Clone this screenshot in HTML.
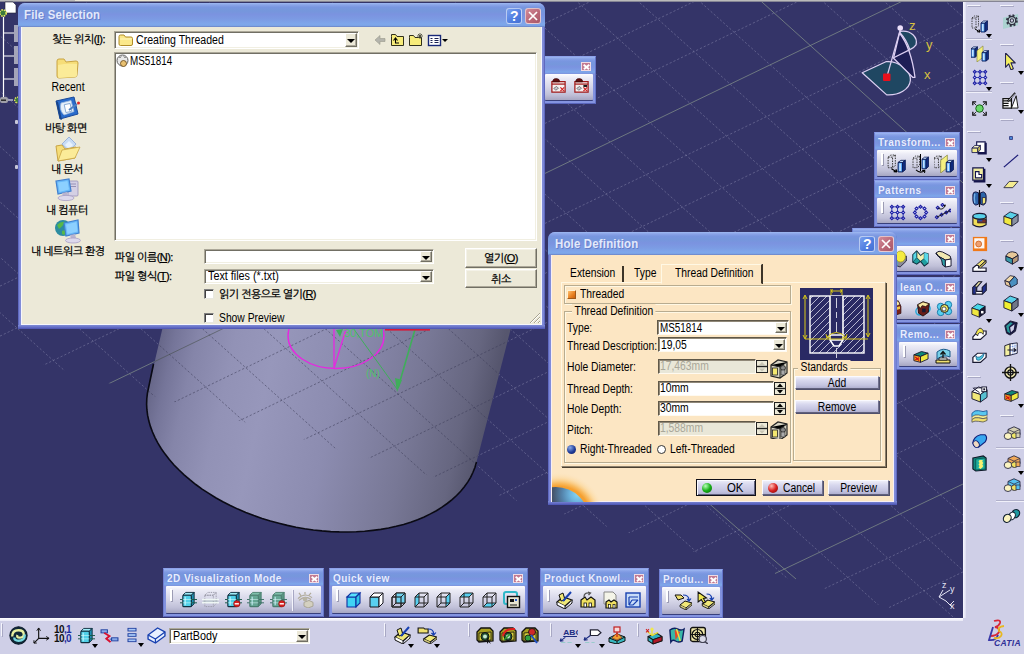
<!DOCTYPE html>
<html lang="ko">
<head>
<meta charset="utf-8">
<title>CATIA V5 - Hole Definition</title>
<style>
*{box-sizing:border-box;margin:0;padding:0}
html,body{width:1024px;height:654px;overflow:hidden;background:#343468}
body{position:relative;font-family:"Liberation Sans","NanumGothic","Noto Sans CJK KR",sans-serif;font-size:12px;color:#000;line-height:1}
.abs{position:absolute}
.t{position:absolute;white-space:nowrap;transform-origin:0 50%;line-height:14px;height:14px}
.k{font-family:"Liberation Sans","NanumGothic","Noto Sans CJK KR",sans-serif;font-size:11px;letter-spacing:-0.55px;-webkit-text-stroke:.25px #000}
#vp{position:absolute;left:0;top:0;width:1024px;height:654px}
/* XP-like window */
.xpwin{position:absolute;background:linear-gradient(to top,#4a52b2 0,#6872c8 2px,#7f8cd8 4px,rgba(0,0,0,0) 4px),linear-gradient(90deg,#4c54b0 0,#7a86d6 1.2px,#848fda 3px,#848fda calc(100% - 3px),#7a86d6 calc(100% - 1.2px),#4c54b0 100%);border-radius:7px 7px 0 0}
.xptitle{position:absolute;left:0;top:0;right:0;height:24px;border-radius:7px 7px 0 0;
 background:linear-gradient(#9fbaf1 0,#8aa4e8 8%,#7996e0 18%,#7597dc 32%,#7b93e0 48%,#7c9ce4 70%,#7ea7eb 88%,#7ba3e6 94%,#6a80c2 100%)}
.xptitle b{position:absolute;left:5px;top:4px;color:#e3e9fb;font-size:13px;font-weight:bold;letter-spacing:.2px;line-height:16px;text-shadow:1px 1px 0 rgba(80,100,180,.55);transform:scaleX(.88);transform-origin:0 50%;white-space:nowrap}
.xbtn{position:absolute;width:16px;height:16px;border-radius:3px;border:1px solid rgba(255,255,255,.6)}
.xclose{background:linear-gradient(135deg,#d28a98,#b96676 60%,#a85868)}
.xhelp{background:linear-gradient(135deg,#7aa0ee,#4f7de0 60%,#4670d2)}
/* classic controls */
.sunk{position:absolute;background:#fff;border:1px solid;border-color:#aca899 #fff #fff #aca899;box-shadow:inset 1px 1px 0 #716f64,inset -1px -1px 0 #f1efe2}
.cbtn{position:absolute;background:#ece9d8;border:1px solid;border-color:#fff #716f64 #716f64 #fff;box-shadow:inset -1px -1px 0 #aca899,inset 1px 1px 0 #f4f2e8;text-align:center}
.arrowbtn{position:absolute;background:#ece9d8;border:1px solid;border-color:#fff #716f64 #716f64 #fff;box-shadow:inset -1px -1px 0 #aca899}
.arrowbtn:after{content:"";position:absolute;left:50%;top:50%;margin:-1px 0 0 -4px;border:4px solid transparent;border-top:4px solid #000;border-bottom:none}
.chk{position:absolute;width:10px;height:10px;background:#fff;border:1px solid;border-color:#808080 #e8e8e0 #e8e8e0 #808080;box-shadow:inset 1px 1px 0 #404040}
/* CATIA floating toolbar */
.ftb{position:absolute;background:linear-gradient(#9cb6f0 0,#86a0e6 2px,#7996e0 4px,#7697dc 7px,#7b93e0 10px,#7c9ce4 13px,#7ea7eb 15px,#7c9ee4 16px,#8090dc 17px,#8494e0 100%);border:1px solid;border-color:#8ea2ea #6474c8 #5a66bc #6e7ed2}
.ftb .ttl{position:absolute;left:3px;top:3px;color:#e8eeff;font-weight:bold;font-size:10px;letter-spacing:.45px;line-height:13px;white-space:nowrap;text-shadow:0 0 1px rgba(90,110,190,.6)}
.ftb .body{position:absolute;left:2px;right:2px;bottom:3px;top:17px;background:linear-gradient(#fdfdff 0,#ececf6 15%,#d6d6e8 50%,#c0c0d8 80%,#a6a6c2 100%);border-radius:1px;box-shadow:0 1px 0 #38407c}
.ftb .grip{position:absolute;left:4px;top:3px;width:2px;height:12px;background:#fff;box-shadow:1px 1px 0 #9c9cb4}
.fx{position:absolute;width:10px;height:9px;top:5px;background:#c27a92;border:1px solid #f0dbe4}
.fx:before,.fx:after{content:"";position:absolute;left:.5px;top:2.7px;width:7px;height:1.6px;background:#fff;transform:rotate(40deg)}
.fx:after{transform:rotate(-40deg)}
/* main toolbars */
#rtb{position:absolute;left:963px;top:2px;width:61px;height:652px;background:#cfcfe7}
#btb{position:absolute;left:0;top:618px;width:1024px;height:36px;background:#cfcfe7}
.ic{position:absolute;width:20px;height:20px}
.sep{position:absolute;background:#f4f4fc;box-shadow:1px 1px 0 #a8a8c4}
.dd{position:absolute;width:0;height:0;border:3px solid transparent;border-top:4px solid #000;border-bottom:none}
/* CATIA dialog controls */
.cbt{position:absolute;background:linear-gradient(#eeeef8 0,#d8d8ee 30%,#c4c4e0 75%,#b0b0d0 100%);border:1px solid;border-color:#fafaff #70708c #60607c #fafaff;box-shadow:1px 1px 0 #50506c;text-align:center}
.grp{position:absolute;border:1px solid #b8ac90;box-shadow:inset 1px 1px 0 #fff8e4, 1px 1px 0 #fff8e4}
.csunk{position:absolute;background:#fff;border:1px solid;border-color:#605848 #fffaf0 #fffaf0 #605848;box-shadow:inset 1px 1px 0 #908878}
.cdis{background:#e9e7d8}
</style>
</head>
<body>
<svg id="vp" width="1024" height="654" viewBox="0 0 1024 654">
<defs>
<linearGradient id="cg" gradientUnits="userSpaceOnUse" x1="148" y1="388" x2="477" y2="462">
<stop offset="0" stop-color="#666688"/><stop offset="0.045" stop-color="#757599"/><stop offset="0.11" stop-color="#8585a9"/><stop offset="0.22" stop-color="#9292b6"/>
<stop offset="0.34" stop-color="#9797bb"/><stop offset="0.55" stop-color="#8c8cb0"/><stop offset="0.78" stop-color="#787896"/>
<stop offset="0.93" stop-color="#666680"/><stop offset="1" stop-color="#56566e"/></linearGradient>
<clipPath id="cylclip"><path d="M163,326 L148.5,388.0 L147.4,393.3 L146.8,398.7 L146.6,404.2 L146.9,409.7 L147.6,415.2 L148.8,420.8 L150.4,426.4 L152.5,432.0 L155.0,437.6 L157.9,443.2 L161.3,448.7 L165.1,454.1 L169.3,459.4 L173.8,464.7 L178.8,469.8 L184.1,474.9 L189.8,479.7 L195.8,484.5 L202.1,489.1 L208.8,493.4 L215.7,497.7 L222.9,501.7 L230.3,505.5 L237.9,509.1 L245.8,512.4 L253.9,515.5 L262.1,518.4 L270.4,521.0 L278.9,523.3 L287.4,525.4 L296.0,527.2 L304.7,528.7 L313.4,530.0 L322.0,530.9 L330.7,531.6 L339.3,531.9 L347.8,532.0 L356.3,531.8 L364.6,531.3 L372.8,530.4 L380.8,529.4 L388.6,528.0 L396.2,526.3 L403.6,524.4 L410.7,522.2 L417.6,519.7 L424.2,516.9 L430.4,513.9 L436.4,510.7 L442.0,507.2 L447.2,503.5 L452.1,499.6 L456.6,495.5 L460.7,491.2 L464.4,486.7 L467.7,482.1 L470.6,477.3 L473.0,472.3 L475.0,467.2 L476.5,462.0 L511.5,326 Z"/></clipPath>
<clipPath id="bgclip"><path clip-rule="evenodd" d="M0,0 L1024,0 L1024,646.8 L0,351.9 Z M163,326 L148.5,388.0 L147.4,393.3 L146.8,398.7 L146.6,404.2 L146.9,409.7 L147.6,415.2 L148.8,420.8 L150.4,426.4 L152.5,432.0 L155.0,437.6 L157.9,443.2 L161.3,448.7 L165.1,454.1 L169.3,459.4 L173.8,464.7 L178.8,469.8 L184.1,474.9 L189.8,479.7 L195.8,484.5 L202.1,489.1 L208.8,493.4 L215.7,497.7 L222.9,501.7 L230.3,505.5 L237.9,509.1 L245.8,512.4 L253.9,515.5 L262.1,518.4 L270.4,521.0 L278.9,523.3 L287.4,525.4 L296.0,527.2 L304.7,528.7 L313.4,530.0 L322.0,530.9 L330.7,531.6 L339.3,531.9 L347.8,532.0 L356.3,531.8 L364.6,531.3 L372.8,530.4 L380.8,529.4 L388.6,528.0 L396.2,526.3 L403.6,524.4 L410.7,522.2 L417.6,519.7 L424.2,516.9 L430.4,513.9 L436.4,510.7 L442.0,507.2 L447.2,503.5 L452.1,499.6 L456.6,495.5 L460.7,491.2 L464.4,486.7 L467.7,482.1 L470.6,477.3 L473.0,472.3 L475.0,467.2 L476.5,462.0 L511.5,326 Z"/></clipPath>
<clipPath id="halfclip"><path d="M0,0 L1024,0 L1024,646.8 L0,351.9 Z"/></clipPath>
</defs>
<g clip-path="url(#bgclip)"><path d="M0.0,286.1 L1024.0,-207.5 M0.0,336.1 L1024.0,-157.5 M0.0,386.1 L1024.0,-107.5 M0.0,486.1 L1024.0,-7.5 M0.0,536.1 L1024.0,42.5 M0.0,586.1 L1024.0,92.5 M0.0,636.1 L1024.0,142.5 M0.0,686.1 L1024.0,192.5 M0.0,736.1 L1024.0,242.5 M0.0,786.1 L1024.0,292.5 M0.0,836.1 L1024.0,342.5 M0.0,886.1 L1024.0,392.5 M0.0,986.1 L1024.0,492.5 M0.0,1036.1 L1024.0,542.5 M0.0,1086.1 L1024.0,592.5 M0.0,1136.1 L1024.0,642.5 M0.0,1186.1 L1024.0,692.5 M-408.8,0.0 L317.8,654.0 M-347.3,0.0 L379.3,654.0 M-285.8,0.0 L440.8,654.0 M-224.3,0.0 L502.3,654.0 M-162.8,0.0 L563.8,654.0 M-101.3,0.0 L625.3,654.0 M-39.8,0.0 L686.8,654.0 M21.7,0.0 L748.3,654.0 M83.2,0.0 L809.8,654.0 M144.7,0.0 L871.3,654.0 M206.2,0.0 L932.8,654.0 M267.7,0.0 L994.3,654.0 M329.2,0.0 L1055.8,654.0 M390.7,0.0 L1117.3,654.0 M452.2,0.0 L1178.8,654.0 M513.7,0.0 L1240.3,654.0 M575.2,0.0 L1301.8,654.0 M636.7,0.0 L1363.3,654.0 M698.2,0.0 L1424.8,654.0 M821.2,0.0 L1547.8,654.0 M882.7,0.0 L1609.3,654.0 M944.2,0.0 L1670.8,654.0 M1005.7,0.0 L1732.3,654.0 M1067.2,0.0 L1793.8,654.0" stroke="#a8a8c8" stroke-opacity="0.36" stroke-width="1" stroke-dasharray="2.2 2" fill="none"/>
<path d="M0.0,436.1 L1024.0,-57.5 M759.7,0.0 L1486.3,654.0" stroke="#90a090" stroke-opacity="0.62" stroke-width="1" fill="none"/>
<path d="M775,573.5 L963,484 M768,555 L796,579 M705,500 L768,555" stroke="#90a090" stroke-opacity="0.62" stroke-width="1" fill="none"/>
</g>
<path d="M163,326 L148.5,388.0 L147.4,393.3 L146.8,398.7 L146.6,404.2 L146.9,409.7 L147.6,415.2 L148.8,420.8 L150.4,426.4 L152.5,432.0 L155.0,437.6 L157.9,443.2 L161.3,448.7 L165.1,454.1 L169.3,459.4 L173.8,464.7 L178.8,469.8 L184.1,474.9 L189.8,479.7 L195.8,484.5 L202.1,489.1 L208.8,493.4 L215.7,497.7 L222.9,501.7 L230.3,505.5 L237.9,509.1 L245.8,512.4 L253.9,515.5 L262.1,518.4 L270.4,521.0 L278.9,523.3 L287.4,525.4 L296.0,527.2 L304.7,528.7 L313.4,530.0 L322.0,530.9 L330.7,531.6 L339.3,531.9 L347.8,532.0 L356.3,531.8 L364.6,531.3 L372.8,530.4 L380.8,529.4 L388.6,528.0 L396.2,526.3 L403.6,524.4 L410.7,522.2 L417.6,519.7 L424.2,516.9 L430.4,513.9 L436.4,510.7 L442.0,507.2 L447.2,503.5 L452.1,499.6 L456.6,495.5 L460.7,491.2 L464.4,486.7 L467.7,482.1 L470.6,477.3 L473.0,472.3 L475.0,467.2 L476.5,462.0 L511.5,326 Z" fill="url(#cg)"/>
<g clip-path="url(#halfclip)"><g clip-path="url(#cylclip)"><path d="M0.0,286.1 L1024.0,-207.5 M0.0,336.1 L1024.0,-157.5 M0.0,386.1 L1024.0,-107.5 M0.0,486.1 L1024.0,-7.5 M0.0,536.1 L1024.0,42.5 M0.0,586.1 L1024.0,92.5 M0.0,636.1 L1024.0,142.5 M0.0,686.1 L1024.0,192.5 M0.0,736.1 L1024.0,242.5 M0.0,786.1 L1024.0,292.5 M0.0,836.1 L1024.0,342.5 M0.0,886.1 L1024.0,392.5 M0.0,986.1 L1024.0,492.5 M0.0,1036.1 L1024.0,542.5 M0.0,1086.1 L1024.0,592.5 M0.0,1136.1 L1024.0,642.5 M0.0,1186.1 L1024.0,692.5 M-408.8,0.0 L317.8,654.0 M-347.3,0.0 L379.3,654.0 M-285.8,0.0 L440.8,654.0 M-224.3,0.0 L502.3,654.0 M-162.8,0.0 L563.8,654.0 M-101.3,0.0 L625.3,654.0 M-39.8,0.0 L686.8,654.0 M21.7,0.0 L748.3,654.0 M83.2,0.0 L809.8,654.0 M144.7,0.0 L871.3,654.0 M206.2,0.0 L932.8,654.0 M267.7,0.0 L994.3,654.0 M329.2,0.0 L1055.8,654.0 M390.7,0.0 L1117.3,654.0 M452.2,0.0 L1178.8,654.0 M513.7,0.0 L1240.3,654.0 M575.2,0.0 L1301.8,654.0 M636.7,0.0 L1363.3,654.0 M698.2,0.0 L1424.8,654.0 M821.2,0.0 L1547.8,654.0 M882.7,0.0 L1609.3,654.0 M944.2,0.0 L1670.8,654.0 M1005.7,0.0 L1732.3,654.0 M1067.2,0.0 L1793.8,654.0" stroke="#3c3c58" stroke-opacity="0.55" stroke-width="1" stroke-dasharray="2.2 2" fill="none"/>
<path d="M0.0,436.1 L1024.0,-57.5" stroke="#444e48" stroke-opacity="0.7" stroke-width=".8" fill="none"/></g></g>
<path d="M153.5,364 L148.5,388.0 L147.4,393.3 L146.8,398.7 L146.6,404.2 L146.9,409.7 L147.6,415.2 L148.8,420.8 L150.4,426.4 L152.5,432.0 L155.0,437.6 L157.9,443.2 L161.3,448.7 L165.1,454.1 L169.3,459.4 L173.8,464.7 L178.8,469.8 L184.1,474.9 L189.8,479.7 L195.8,484.5 L202.1,489.1 L208.8,493.4 L215.7,497.7 L222.9,501.7 L230.3,505.5 L237.9,509.1 L245.8,512.4 L253.9,515.5 L262.1,518.4 L270.4,521.0 L278.9,523.3 L287.4,525.4 L296.0,527.2 L304.7,528.7 L313.4,530.0 L322.0,530.9 L330.7,531.6 L339.3,531.9 L347.8,532.0 L356.3,531.8 L364.6,531.3 L372.8,530.4 L380.8,529.4 L388.6,528.0 L396.2,526.3 L403.6,524.4 L410.7,522.2 L417.6,519.7 L424.2,516.9 L430.4,513.9 L436.4,510.7 L442.0,507.2 L447.2,503.5 L452.1,499.6 L456.6,495.5 L460.7,491.2 L464.4,486.7 L467.7,482.1 L470.6,477.3 L473.0,472.3 L475.0,467.2 L476.5,462.0" stroke="#0a0a14" stroke-width="1.6" fill="none"/>
<ellipse cx="336" cy="336" rx="48" ry="32.5" fill="none" stroke="#e628e0" stroke-width="1.4"/>
<path d="M334,326 L334,368 M347,326 L334,368" stroke="#e628e0" stroke-width="1.3" fill="none"/>
<path d="M353,328 L397,389" stroke="#3fae5a" stroke-width="1" fill="none"/>
<path d="M416,326 L398,388" stroke="#3fae5a" stroke-width="1.6" fill="none"/><path d="M395,378 L402,380 L397,392 Z" fill="#3fae5a"/>
<path d="M336,330 L340,337 L343,329 Z" fill="#3fae5a"/>
<text x="344" y="337" font-family="Liberation Sans,sans-serif" font-size="11" fill="#4fc06a">30,TOM</text>
<text x="366" y="377" font-family="Liberation Sans,sans-serif" font-size="10" fill="#4fc06a">(N)</text>
<rect x="385" y="326" width="45" height="4.6" fill="#d81838"/>
<g fill="none" stroke="#dccff2" stroke-width="1.25" stroke-linejoin="round">
<path d="M862.2,72.7 L885.9,61.7 C898.9,60.5 911.2,71.2 910.4,80.3 C909.6,89.5 898.9,95.6 886.7,94.9 Z" fill="#1f4762"/>
<path d="M899.5,33 C905,40 912,55 915,77.3 L912.7,77.3 L893.6,58.2 Z" fill="#1e1e55"/>
<path d="M900.2,31.4 C911.2,29.9 918,37.5 916,44.9 Q914,48 909.9,49.6 C907,42 904,37 900.2,33 Z" fill="#1f4762"/>
<path d="M893.6,57.8 L909.9,49.6"/>
<path d="M900.2,30 L886.7,77.3"/>
</g>
<circle cx="900.2" cy="28" r="2.8" fill="#ece0fa"/>
<rect x="883" y="73.5" width="7.5" height="7.5" rx="1" fill="#e8101c"/>
<g font-family="Liberation Sans,sans-serif" font-size="12" fill="#d8c040">
<text x="909" y="30" font-size="13">z</text><text x="926" y="49" font-size="13">y</text><text x="924" y="79" font-size="13">x</text></g>
<g stroke="#e4e4f4" stroke-width="1" fill="none"><path d="M943,590 L939,597 L946,601 M939,597 L950,590 M946,601 L952,607 M950,605 L954,601"/></g>
<g font-family="Liberation Sans,sans-serif" font-size="9" fill="#e4e4f4"><text x="942" y="588">z</text><text x="950" y="592">y</text><text x="950" y="609">x</text></g>

</svg>
<!-- top strip -->
<div class="abs" style="left:0;top:0;width:1024px;height:2px;background:linear-gradient(#c4c4c4 0,#b0b0b0 50%,#5a5a78 100%)"></div>
<div class="abs" style="left:75px;top:0;width:105px;height:1px;background:#e8e4d4"></div>
<!-- specification tree remnants -->
<svg class="abs" style="left:0;top:0" width="20" height="120" viewBox="0 0 20 120">
<path d="M5,2 L13,2 L16,5 L16,13 L5,13 Z" fill="#fff" stroke="#223" stroke-width=".6"/>
<circle cx="3" cy="13" r="3.2" fill="#3c7a3c" stroke="#e8e860" stroke-width="1.6" stroke-dasharray="1.6 1"/>
<path d="M3.5,17 L3.5,100 M3.5,33 L14,33 M3.5,56 L14,56 M3.5,79 L14,79" stroke="#fff" stroke-width="1.2" fill="none"/>
<g fill="#b8b8c8" opacity=".85"><rect x="14" y="25" width="4" height="17"/><rect x="14" y="46" width="4" height="18"/><rect x="14" y="68" width="4" height="18"/></g>
<rect x="0" y="97" width="8" height="6" rx="2" fill="#a0a0a8"/><rect x="1" y="99.5" width="5" height="1.4" fill="#222"/>
<path d="M8,100 L13,100" stroke="#fff" stroke-width="1"/>
<circle cx="17.5" cy="100" r="2.8" fill="#3c7a3c" stroke="#e8e860" stroke-width="1.4" stroke-dasharray="1.5 1"/>
</svg>
<div class="abs" style="left:15px;top:120px;width:3px;height:4px;background:#c8c8d8;border-radius:1px"></div>
<div class="abs" style="left:15px;top:165px;width:3px;height:4px;background:#c8c8d8;border-radius:1px"></div>
<div class="ftb" style="left:542px;top:56px;width:54px;height:48px"><i class="fx" style="left:38px"></i><div class="body"></div></div><svg class="abs" style="left:550px;top:77px" width="17" height="17" viewBox="0 0 18 18" preserveAspectRatio="none"><path d="M2,5 H16 V16 H2 Z" fill="#f4f0f0" stroke="#a01818" stroke-width="1.300"/><path d="M3,5 Q3,1 8,2 Q10,2 10,5 Z" fill="#601010" stroke="#400808"/><path d="M2,7.500 H16" stroke="#a01818" stroke-width="1.300"/><path d="M4,12 l3,-2 l2,2 l-3,2z" fill="#c8c8d0" stroke="#555" stroke-width=".7"/><path d="M11,11 L15,15 M15,11 L11,15" stroke="#d02020" stroke-width="1.200"/></svg><svg class="abs" style="left:573px;top:77px" width="17" height="17" viewBox="0 0 18 18" preserveAspectRatio="none"><path d="M2,5 H16 V16 H2 Z" fill="#f4f0f0" stroke="#a01818" stroke-width="1.300"/><path d="M3,5 Q3,1 8,2 Q10,2 10,5 Z" fill="#601010" stroke="#400808"/><path d="M2,7.500 H16" stroke="#a01818" stroke-width="1.300"/><path d="M4,12 l3,-2 l2,2 l-3,2z" fill="#c8c8d0" stroke="#555" stroke-width=".7"/><path d="M11,11 L15,15 M15,11 L11,15" stroke="#d02020" stroke-width="1.200"/><rect x="11" y="8.500" width="4" height="2" fill="#111"/></svg>
<!-- File Selection dialog -->
<div class="xpwin" id="fs" style="left:18px;top:3px;width:527px;height:326px">
 <div class="xptitle"><b style="left:6px">File Selection</b></div>
 <div class="xbtn xhelp" style="left:488px;top:5px"><span class="t" style="left:3px;top:0;color:#fff;font-weight:bold;font-size:14px">?</span></div>
 <div class="xbtn xclose" style="left:507px;top:5px"><svg width="14" height="14" viewBox="0 0 14 14" style="position:absolute;left:0;top:0"><path d="M3,3 L11,11 M11,3 L3,11" stroke="#fff" stroke-width="1.7"/></svg></div>
 <div class="abs" id="fsbody" style="left:3px;top:24px;width:521px;height:298px;background:#ece9d8;border:1px solid #f6f6fc;border-top:none"></div>
</div>
<div class="abs" id="fsc" style="left:0;top:0;width:0;height:0">
 <span class="t k" style="left:52px;top:32px">찾는 위치(<u>I</u>):</span>
 <div class="sunk" style="left:114px;top:31px;width:245px;height:18px"></div>
 <svg class="abs" style="left:118px;top:33px" width="16" height="14" viewBox="0 0 16 14"><path d="M1,3.5 Q1,2 2.5,2 L6,2 L7.5,4 L13,4 Q14.5,4 14.5,5.5 L14.5,11 Q14.5,12.5 13,12.5 L2.5,12.5 Q1,12.5 1,11 Z" fill="#fbe88a" stroke="#b08c28" stroke-width="1"/><path d="M2,6 L13.5,6" stroke="#fff6c0" stroke-width="1"/></svg>
 <span class="t" style="left:136px;top:33px;transform:scaleX(.88)">Creating Threaded</span>
 <div class="arrowbtn" style="left:345px;top:33px;width:12px;height:14px"></div>
 <!-- toolbar icons -->
 <svg class="abs" style="left:372px;top:32px" width="78" height="16" viewBox="0 0 78 16">
  <path d="M3,8 L8,3.5 L8,6.5 L13,6.5 L13,9.5 L8,9.5 L8,12.5 Z" fill="#b4b4ac" stroke="#98988c" stroke-width=".6"/>
  <path d="M19.5,4.5 L19.5,13.5 L31.5,13.5 L31.5,4.5 L25,4.5 L23.5,2.5 L19.5,2.5 Z" fill="#f7ec7a" stroke="#30301c" stroke-width="1"/>
  <path d="M23,11 L27,11 M23.5,11 L23.5,7 M21.5,8.5 L23.5,6 L25.5,8.5" stroke="#000" stroke-width="1.1" fill="none"/>
  <path d="M37.500,5.5 L37.500,13.5 L49.500,13.5 L49.500,5.5 L43,5.5 L41.500,3.5 L37.500,3.5 Z" fill="#f7ec7a" stroke="#30301c" stroke-width="1"/>
  <path d="M48,1 L48,7 M45,4 L51,4 M46,2 L50,6 M50,2 L46,6" stroke="#505040" stroke-width=".9"/>
  <rect x="56.500" y="3.500" width="12" height="10" fill="#fff" stroke="#182878" stroke-width="1.4"/>
  <path d="M58.500,6.500 h2 M62.500,6.500 h4 M58.500,8.500 h2 M62.500,8.500 h4 M58.500,10.500 h2 M62.500,10.500 h4" stroke="#182050" stroke-width="1"/>
  <path d="M70,7 L76,7 L73,10 Z" fill="#000"/>
 </svg>
 <!-- places bar -->
 <svg class="abs" style="left:55px;top:56px" width="26" height="24" viewBox="0 0 26 24">
  <path d="M2,5 Q2,3 4,3 L9,3 L11,6 L21,5 Q23,5 23,7 L22,19 Q22,21 20,21 L4,22 Q2,22 2,20 Z" fill="#f6dd78" stroke="#c8a444" stroke-width="1"/>
  <path d="M3,9 Q12,7 22,8 L22,19 Q22,21 20,21 L4,22 Q3,22 3,20 Z" fill="#fbeb98"/>
 </svg>
 <span class="t" style="left:49px;top:80px;width:38px;text-align:center;transform:scaleX(.87);transform-origin:50% 50%">Recent</span>
 <svg class="abs" style="left:54px;top:96px" width="28" height="25" viewBox="0 0 28 25">
  <path d="M2,5 L20,1 L24,18 L6,23 Z" fill="#2a6ccc" stroke="#1a4a9c" stroke-width="1"/>
  <path d="M2,5 L6,23 L8,24 L4,6 Z" fill="#184488"/>
  <path d="M7,7 L17,4.500 L20,15.500 L10,19 Q5,14 7,7 Z" fill="#e6f0fa" stroke="#9ab8dc" stroke-width=".8"/>
  <rect x="11" y="8" width="6" height="8" fill="#fff" stroke="#7aa0d0" stroke-width=".8" transform="rotate(-12 14 12)"/>
  <path d="M15,14 L23,8" stroke="#5080c0" stroke-width="2"/><circle cx="24.500" cy="7" r="1.500" fill="#e02828"/>
 </svg>
 <span class="t k" style="left:45px;top:121px">바탕 화면</span>
 <svg class="abs" style="left:54px;top:136px" width="28" height="26" viewBox="0 0 28 26">
  <path d="M8,8 L15,1 L22,8 L15,16 Z" fill="#c8dcf4" stroke="#8aa8d8" stroke-width=".8"/>
  <path d="M11,9 L15,5 L19,9 L15,13 Z" fill="#e8f2fc"/>
  <path d="M2,10 L8,9 L11,13 L22,11 L21,22 L4,25 Z" fill="#f6dd78" stroke="#c8a444" stroke-width="1"/>
  <path d="M4,25 L8,14 L26,11 L21,22 Z" fill="#fbeb98" stroke="#c8a444" stroke-width=".8"/>
 </svg>
 <span class="t k" style="left:51px;top:162px">내 문서</span>
 <svg class="abs" style="left:54px;top:177px" width="28" height="26" viewBox="0 0 28 26">
  <rect x="14" y="4" width="10" height="15" rx="1" fill="#d4d0e4" stroke="#9890b8" stroke-width=".8"/>
  <path d="M16,7 h6 M16,9.500 h6" stroke="#8880a8" stroke-width=".8"/>
  <path d="M2,4 L15,2 L17,14 L4,17 Z" fill="#68b8f8" stroke="#4080d0" stroke-width="1.2"/>
  <path d="M4,5.500 L13.500,4 L15,12.500 L5.500,15 Z" fill="#8cd0ff"/>
  <path d="M8,16 L13,15 L14,19 L9,20 Z" fill="#b8b4d0"/>
  <ellipse cx="12" cy="21" rx="8" ry="2.600" fill="#dcd8ec" stroke="#a8a0c8" stroke-width=".8"/>
 </svg>
 <span class="t k" style="left:46px;top:203px">내 컴퓨터</span>
 <svg class="abs" style="left:53px;top:217px" width="30" height="27" viewBox="0 0 30 27">
  <circle cx="10" cy="11" r="8" fill="#2c8ca0"/><path d="M4,8 Q8,4 12,5 Q10,9 6,12 Z M9,14 Q13,12 15,15 Q12,19 9,17 Z" fill="#58b848"/>
  <path d="M11,6 L25,3 L26,16 L13,19 Z" fill="#68b8f8" stroke="#4080d0" stroke-width="1.2"/>
  <path d="M13,7.500 L23.500,5 L24.500,14.500 L14.500,17 Z" fill="#8cd0ff"/>
  <path d="M17,18 L22,17 L23,21 L18,22 Z" fill="#b8b4d0"/>
  <ellipse cx="20" cy="23.500" rx="7.500" ry="2.500" fill="#dcd8ec" stroke="#a8a0c8" stroke-width=".8"/>
 </svg>
 <span class="t k" style="left:31px;top:244px">내 네트워크 환경</span>
 <!-- list -->
 <div class="sunk" style="left:114px;top:52px;width:423px;height:189px"></div>
 <svg class="abs" style="left:116px;top:54px" width="14" height="14" viewBox="0 0 14 14"><circle cx="6.500" cy="6.500" r="5.500" fill="#e8e8e8" stroke="#606060" stroke-width="1"/><path d="M3.500,4 L5,2.500 M8,2.500 L9.500,4" stroke="#404040" stroke-width="1"/><circle cx="7.500" cy="9.500" r="3" fill="#e8c070" stroke="#705020" stroke-width=".9"/></svg>
 <span class="t" style="left:130px;top:54px;transform:scaleX(.82)">MS51814</span>
 <!-- bottom fields -->
 <span class="t k" style="left:115px;top:250px">파일 이름(<u>N</u>):</span>
 <div class="sunk" style="left:204px;top:249px;width:230px;height:15px"></div>
 <div class="arrowbtn" style="left:420px;top:251px;width:12px;height:11px"></div>
 <span class="t k" style="left:115px;top:269px">파일 형식(<u>T</u>):</span>
 <div class="sunk" style="left:204px;top:269px;width:230px;height:15px"></div>
 <span class="t" style="left:208px;top:269px;transform:scaleX(.9)">Text files (*.txt)</span>
 <div class="arrowbtn" style="left:420px;top:271px;width:12px;height:11px"></div>
 <div class="chk" style="left:204px;top:289px"></div>
 <span class="t k" style="left:219px;top:287px">읽기 전용으로 열기(<u>R</u>)</span>
 <div class="chk" style="left:204px;top:313px"></div>
 <span class="t" style="left:219px;top:311px;transform:scaleX(.86)">Show Preview</span>
 <div class="cbtn" style="left:465px;top:248px;width:72px;height:20px"><span class="t k" style="left:0;right:0;top:2px;text-align:center">열기(<u>O</u>)</span></div>
 <div class="cbtn" style="left:465px;top:269px;width:72px;height:19px"><span class="t k" style="left:0;right:0;top:2px;text-align:center">취소</span></div>
 <svg class="abs" style="left:529px;top:312px" width="12" height="12" viewBox="0 0 12 12"><path d="M11,1 L1,11 M11,5 L5,11 M11,9 L9,11" stroke="#a8a490" stroke-width="1"/><path d="M11,2 L2,11 M11,6 L6,11 M11,10 L10,11" stroke="#fff" stroke-width="1"/></svg>
</div>
<div class="ftb" style="left:874px;top:132px;width:86px;height:48px"><span class="ttl">Transform...</span><i class="fx" style="left:70px"></i><div class="body"><i class="grip"></i></div></div><svg class="abs" style="left:887px;top:154px" width="20" height="19" viewBox="0 0 18 18" preserveAspectRatio="none"><path d="M1,3 h4 v10 h-4 Z M1,3 l2.5,-2 h4 l-2.5,2 M7.5,1 v10 l-2.5,2" fill="none" stroke="#333" stroke-width=".9" stroke-dasharray="1.4 1"/><path d="M10,8 h4 v9 h-4 Z" fill="#58a8f8" stroke="#0c1c58" stroke-width=".9"/><path d="M11.8,9 v7" stroke="#e0f0ff" stroke-width="1.2"/><path d="M10,8 l2.5,-2 h4 l-2.5,2 Z" fill="#c8e4ff" stroke="#0c1c58" stroke-width=".8"/><path d="M14,8 l2.5,-2 v9 l-2.5,2 Z" fill="#102c80" stroke="#0c1c58" stroke-width=".8"/><path d="M4,14 L9,17 M9,17 l-3,-.3 M9,17 l-1,-2.600" stroke="#000" stroke-width="1" fill="none"/></svg><svg class="abs" style="left:912px;top:154px" width="18" height="19" viewBox="0 0 18 18" preserveAspectRatio="none"><path d="M1,4 h4 v9 h-4 Z M1,4 l2.5,-2 h4 l-2.5,2 M7.5,2 v9 l-2.5,2" fill="none" stroke="#333" stroke-width=".9" stroke-dasharray="1.4 1"/><path d="M10,5 h4 v9 h-4 Z" fill="#58a8f8" stroke="#0c1c58" stroke-width=".9"/><path d="M11.8,6 v7" stroke="#e0f0ff" stroke-width="1.2"/><path d="M10,5 l2.5,-2 h4 l-2.5,2 Z" fill="#c8e4ff" stroke="#0c1c58" stroke-width=".8"/><path d="M14,5 l2.5,-2 v9 l-2.5,2 Z" fill="#102c80" stroke="#0c1c58" stroke-width=".8"/><path d="M8.500,0 V16" stroke="#000" stroke-width="1"/><path d="M4,15 Q8,19 13,15.500 M13,15.500 l-2.800,.2 M13,15.500 l-.5,2.600" stroke="#000" fill="none" stroke-width="1"/></svg><svg class="abs" style="left:934px;top:154px" width="20" height="19" viewBox="0 0 18 18" preserveAspectRatio="none"><path d="M0,4 h4 v9 h-4 Z M0,4 l2.5,-2 h4 l-2.5,2 M6.5,2 v9 l-2.5,2" fill="none" stroke="#333" stroke-width=".9" stroke-dasharray="1.4 1"/><path d="M6,6 L12,1 L12,13 L6,18 Z" fill="#f4f080" stroke="#8a8a40" stroke-width=".7"/><path d="M11,8 h4 v9 h-4 Z" fill="#58a8f8" stroke="#0c1c58" stroke-width=".9"/><path d="M12.8,9 v7" stroke="#e0f0ff" stroke-width="1.2"/><path d="M11,8 l2.5,-2 h4 l-2.5,2 Z" fill="#c8e4ff" stroke="#0c1c58" stroke-width=".8"/><path d="M15,8 l2.5,-2 v9 l-2.5,2 Z" fill="#102c80" stroke="#0c1c58" stroke-width=".8"/></svg>
<div class="ftb" style="left:874px;top:180px;width:86px;height:47px"><span class="ttl">Patterns</span><i class="fx" style="left:70px"></i><div class="body"><i class="grip"></i></div></div><svg class="abs" style="left:889px;top:204px" width="17" height="17" viewBox="0 0 18 18" preserveAspectRatio="none"><path d="M3,3 H15 M3,9 H15 M3,15 H15 M3,3 V15 M9,3 V15 M15,3 V15" stroke="#2030b0" stroke-width=".9"/><path d="M1.4,3 l1.600,-1.600 l1.600,1.600 l-1.600,1.600 Z" fill="#b8c0ff" stroke="#1c1ca0" stroke-width="1.1"/><path d="M1.4,9 l1.600,-1.600 l1.600,1.600 l-1.600,1.600 Z" fill="#b8c0ff" stroke="#1c1ca0" stroke-width="1.1"/><path d="M1.4,15 l1.600,-1.600 l1.600,1.600 l-1.600,1.600 Z" fill="#b8c0ff" stroke="#1c1ca0" stroke-width="1.1"/><path d="M7.4,3 l1.600,-1.600 l1.600,1.600 l-1.600,1.600 Z" fill="#b8c0ff" stroke="#1c1ca0" stroke-width="1.1"/><path d="M7.4,9 l1.600,-1.600 l1.600,1.600 l-1.600,1.600 Z" fill="#b8c0ff" stroke="#1c1ca0" stroke-width="1.1"/><path d="M7.4,15 l1.600,-1.600 l1.600,1.600 l-1.600,1.600 Z" fill="#b8c0ff" stroke="#1c1ca0" stroke-width="1.1"/><path d="M13.4,3 l1.600,-1.600 l1.600,1.600 l-1.600,1.600 Z" fill="#b8c0ff" stroke="#1c1ca0" stroke-width="1.1"/><path d="M13.4,9 l1.600,-1.600 l1.600,1.600 l-1.600,1.600 Z" fill="#b8c0ff" stroke="#1c1ca0" stroke-width="1.1"/><path d="M13.4,15 l1.600,-1.600 l1.600,1.600 l-1.600,1.600 Z" fill="#b8c0ff" stroke="#1c1ca0" stroke-width="1.1"/></svg><svg class="abs" style="left:912px;top:204px" width="17" height="17" viewBox="0 0 18 18" preserveAspectRatio="none"><circle cx="9" cy="9" r="6" fill="none" stroke="#2030b0" stroke-width=".9"/><path d="M13.4,9 l1.600,-1.600 l1.600,1.600 l-1.600,1.600 Z" fill="#b8c0ff" stroke="#1c1ca0" stroke-width="1.1"/><path d="M11.6426,13.2426 l1.600,-1.600 l1.600,1.600 l-1.600,1.600 Z" fill="#b8c0ff" stroke="#1c1ca0" stroke-width="1.1"/><path d="M7.4,15 l1.600,-1.600 l1.600,1.600 l-1.600,1.600 Z" fill="#b8c0ff" stroke="#1c1ca0" stroke-width="1.1"/><path d="M3.15736,13.2426 l1.600,-1.600 l1.600,1.600 l-1.600,1.600 Z" fill="#b8c0ff" stroke="#1c1ca0" stroke-width="1.1"/><path d="M1.4,9 l1.600,-1.600 l1.600,1.600 l-1.600,1.600 Z" fill="#b8c0ff" stroke="#1c1ca0" stroke-width="1.1"/><path d="M3.15736,4.75736 l1.600,-1.600 l1.600,1.600 l-1.600,1.600 Z" fill="#b8c0ff" stroke="#1c1ca0" stroke-width="1.1"/><path d="M7.4,3 l1.600,-1.600 l1.600,1.600 l-1.600,1.600 Z" fill="#b8c0ff" stroke="#1c1ca0" stroke-width="1.1"/><path d="M11.6426,4.75736 l1.600,-1.600 l1.600,1.600 l-1.600,1.600 Z" fill="#b8c0ff" stroke="#1c1ca0" stroke-width="1.1"/></svg><svg class="abs" style="left:934px;top:203px" width="17" height="17" viewBox="0 0 18 18" preserveAspectRatio="none"><path d="M1.4,15 l1.600,-1.600 l1.600,1.600 l-1.600,1.600 Z" fill="#b8c0ff" stroke="#1c1ca0" stroke-width="1.1"/><path d="M6.4,12.5 l1.600,-1.600 l1.600,1.600 l-1.600,1.600 Z" fill="#b8c0ff" stroke="#1c1ca0" stroke-width="1.1"/><path d="M11.4,10 l1.600,-1.600 l1.600,1.600 l-1.600,1.600 Z" fill="#b8c0ff" stroke="#1c1ca0" stroke-width="1.1"/><path d="M15.4,8 l1.600,-1.600 l1.600,1.600 l-1.600,1.600 Z" fill="#b8c0ff" stroke="#1c1ca0" stroke-width="1.1"/><path d="M2.4,5 l1.600,-1.600 l1.600,1.600 l-1.600,1.600 Z" fill="#b8c0ff" stroke="#1c1ca0" stroke-width="1.1"/><path d="M7.4,2 l1.600,-1.600 l1.600,1.600 l-1.600,1.600 Z" fill="#b8c0ff" stroke="#1c1ca0" stroke-width="1.1"/><path d="M3,15 L17,8" stroke="#111" stroke-width="1"/><path d="M4,5 Q9,9 12,2.500" stroke="#111" fill="none"/><path d="M12.500,1.500 l-2.800,1 l2,1.800z" fill="#111"/></svg>
<div class="ftb" style="left:852px;top:228px;width:108px;height:47px"><i class="fx" style="left:92px"></i><div class="body"></div></div><svg class="abs" style="left:893px;top:250px" width="16" height="18" viewBox="0 0 18 18" preserveAspectRatio="none"><path d="M2,9 L9,9 L15,6 L15,11 L8,17 L2,15 Z" fill="#8a8a98" stroke="#181830" stroke-width=".9"/><path d="M2,9 L2,15 L5,16 L5,10 Z" fill="#38b8c8"/><circle cx="8.500" cy="6.500" r="5.500" fill="#f4ec40" stroke="#a09820" stroke-width=".8"/></svg><svg class="abs" style="left:912px;top:250px" width="17" height="17" viewBox="0 0 18 18" preserveAspectRatio="none"><path d="M1,5 L5,1 L9,6 L13,3 L17,4 L17,14 L13,17 L9,12 L5,15 L1,13 Z" fill="#20a0a0" stroke="#103040" stroke-width="1.100"/><path d="M5,1 L9,6 L13,3 L13,9 L9,12 L5,8 Z" fill="#f0f0b0" stroke="#103040" stroke-width=".8"/><path d="M13,3 L17,4 L17,14 L13,9 Z" fill="#58d8e8"/><path d="M1,5 L5,1 L5,8 L1,13 Z" fill="#58d8e8" stroke="#103040" stroke-width=".7"/></svg><svg class="abs" style="left:935px;top:250px" width="17" height="18" viewBox="0 0 18 18" preserveAspectRatio="none"><path d="M1,3 Q4,0 8,2 L16,6 L17,9 L11,10 L3,6 Z" fill="#f0e8b0" stroke="#181830" stroke-width="1"/><path d="M1,3 L3,6 L11,10 L11,17 L8,15 L7,10 Z" fill="#30a0a8" stroke="#181830" stroke-width="1"/><path d="M11,10 L17,9 L17,16 L11,17 Z" fill="#fff" stroke="#181830" stroke-width="1"/></svg>
<div class="ftb" style="left:852px;top:277px;width:108px;height:46px"><span class="ttl"><span style="margin-left:44px">lean O...</span></span><i class="fx" style="left:92px"></i><div class="body"></div></div><svg class="abs" style="left:892px;top:300px" width="16" height="16" viewBox="0 0 18 18" preserveAspectRatio="none"><path d="M0,3 L7,1 L10,7 L10,15 L4,17 L0,12 Z" fill="#7a2018" stroke="#301010" stroke-width=".9"/><path d="M0,3 L7,1 L9,5 L3,8 Z" fill="#f8e8a0" stroke="#301010" stroke-width=".7"/><path d="M1,9 L9,7 L9,10 L2,12 Z" fill="#f0c848"/></svg><svg class="abs" style="left:915px;top:300px" width="16" height="17" viewBox="0 0 18 18" preserveAspectRatio="none"><circle cx="5" cy="12" r="4" fill="none" stroke="#28a8d8" stroke-width="1.600"/><circle cx="13" cy="9" r="4" fill="none" stroke="#28a8d8" stroke-width="1.600"/><path d="M3,5 L9,2 L16,4 L15,13 L9,17 L4,14 Z" fill="#6a1c18" stroke="#200c0c" stroke-width="1"/><path d="M3,5 L9,2 L16,4 L12,7 L8,6 L6,9 Z" fill="#f8e8a0" stroke="#200c0c" stroke-width=".8"/><rect x="8" y="9" width="4" height="4" fill="#181830"/></svg><svg class="abs" style="left:936px;top:300px" width="17" height="17" viewBox="0 0 18 18" preserveAspectRatio="none"><circle cx="5" cy="7" r="3.600" fill="#58d0f0" stroke="#1878a8"/><circle cx="13" cy="5" r="3.600" fill="#58d0f0" stroke="#1878a8"/><circle cx="5" cy="13" r="3.600" fill="#58d0f0" stroke="#1878a8"/><circle cx="13" cy="12" r="3.600" fill="#58d0f0" stroke="#1878a8"/><circle cx="9" cy="9" r="4.200" fill="#f4ec60" stroke="#181830" stroke-width="1"/><circle cx="8.500" cy="9.500" r="2.200" fill="#fff" stroke="#181830" stroke-width=".8"/></svg>
<!-- Hole Definition dialog -->
<div class="xpwin" id="hd" style="left:548px;top:232px;width:349px;height:273px">
 <div class="xptitle" style="height:23px"><b style="top:4px;left:7px">Hole Definition</b></div>
 <div class="xbtn xhelp" style="left:311px;top:4px"><span class="t" style="left:3px;top:0;color:#fff;font-weight:bold;font-size:14px">?</span></div>
 <div class="xbtn xclose" style="left:330px;top:4px"><svg width="14" height="14" viewBox="0 0 14 14" style="position:absolute;left:0;top:0"><path d="M3,3 L11,11 M11,3 L3,11" stroke="#fff" stroke-width="1.7"/></svg></div>
 <div class="abs" style="left:3px;top:23px;width:343px;height:247px;background:#fce6c3;border:1px solid #f6eef4;border-top:none"></div>
</div>
<div class="abs" id="hdc" style="left:0;top:0;width:0;height:0">
 <!-- globe decoration -->
 <svg class="abs" style="left:552px;top:464px" width="60" height="38" viewBox="552 464 60 38">
  <defs><radialGradient id="gl" gradientUnits="userSpaceOnUse" cx="559" cy="518" r="48"><stop offset="0" stop-color="#f6a030"/><stop offset=".66" stop-color="#f6a030"/><stop offset=".73" stop-color="#f8b450" stop-opacity=".85"/><stop offset=".83" stop-color="#fbd088" stop-opacity=".45"/><stop offset=".96" stop-color="#fce6c3" stop-opacity="0"/><stop offset="1" stop-color="#fce6c3" stop-opacity="0"/></radialGradient>
  <radialGradient id="gb" gradientUnits="userSpaceOnUse" cx="578" cy="494" r="40"><stop offset="0" stop-color="#8ad8f4"/><stop offset=".2" stop-color="#6cb4de"/><stop offset=".4" stop-color="#5484ac"/><stop offset=".62" stop-color="#46566e"/><stop offset="1" stop-color="#32323c"/></radialGradient></defs>
  <circle cx="559" cy="518" r="48" fill="url(#gl)"/>
  <circle cx="556" cy="520" r="33" fill="url(#gb)"/>
 </svg>
 <!-- tab page frame -->
 <div class="grp" style="left:561px;top:282px;width:325px;height:185px;border-color:#fff8e4 #8c806c #8c806c #fff8e4;box-shadow:1px 1px 0 #4a4030"></div>
 <!-- tabs -->
 <span class="t" style="left:570px;top:266px;transform:scaleX(.86)">Extension</span>
 <div class="abs" style="left:622px;top:266px;width:2px;height:16px;background:#3c3428"></div>
 <span class="t" style="left:634px;top:266px;transform:scaleX(.86)">Type</span>
 <div class="abs" style="left:661px;top:264px;width:101px;height:20px;background:#fce6c3;border:1px solid;border-color:#fff8e4 #3c3428 transparent #fff8e4;box-shadow:1px 0 0 #3c3428"></div>
 <span class="t" style="left:675px;top:266px;transform:scaleX(.86)">Thread Definition</span>
 <!-- threaded row -->
 <div class="grp" style="left:564px;top:285px;width:227px;height:19px"></div>
 <div class="abs" style="left:567px;top:290px;width:9px;height:9px;background:linear-gradient(135deg,#ffc070,#e88020 60%,#c86010);border:1px solid;border-color:#fff0d0 #a05818 #a05818 #fff0d0"></div>
 <span class="t" style="left:580px;top:287px;transform:scaleX(.86)">Threaded</span>
 <!-- thread definition group -->
 <div class="grp" style="left:564px;top:311px;width:227px;height:152px"></div>
 <span class="t" style="left:572px;top:304px;background:#fce6c3;padding:0 3px;transform:scaleX(.86)">Thread Definition</span>
 <span class="t" style="left:567px;top:321px;transform:scaleX(.86)">Type:</span>
 <div class="csunk" style="left:657px;top:320px;width:132px;height:15px"></div>
 <span class="t" style="left:660px;top:321px;transform:scaleX(.82)">MS51814</span>
 <div class="arrowbtn" style="left:775px;top:322px;width:12px;height:11px"></div>
 <span class="t" style="left:567px;top:339px;transform:scaleX(.86)">Thread Description:</span>
 <div class="csunk" style="left:658px;top:337px;width:129px;height:15px"></div>
 <span class="t" style="left:661px;top:338px;transform:scaleX(.86)">19,05</span>
 <div class="arrowbtn" style="left:773px;top:339px;width:12px;height:11px"></div>
 <span class="t" style="left:567px;top:360px;transform:scaleX(.86)">Hole Diameter:</span>
 <div class="csunk cdis" style="left:658px;top:359px;width:98px;height:15px"></div>
 <span class="t" style="left:660px;top:359px;color:#aaa89a;transform:scaleX(.86)">17,463mm</span>
 <span class="t" style="left:567px;top:382px;transform:scaleX(.86)">Thread Depth:</span>
 <div class="csunk" style="left:658px;top:381px;width:116px;height:15px"></div>
 <span class="t" style="left:660px;top:381px;transform:scaleX(.86)">10mm</span>
 <span class="t" style="left:567px;top:402px;transform:scaleX(.86)">Hole Depth:</span>
 <div class="csunk" style="left:658px;top:401px;width:116px;height:15px"></div>
 <span class="t" style="left:660px;top:401px;transform:scaleX(.86)">30mm</span>
 <span class="t" style="left:567px;top:423px;transform:scaleX(.86)">Pitch:</span>
 <div class="csunk cdis" style="left:658px;top:421px;width:98px;height:15px"></div>
 <span class="t" style="left:660px;top:421px;color:#aaa89a;transform:scaleX(.86)">1,588mm</span>
 <!-- spinners -->
 <svg class="abs" style="left:756px;top:359px" width="34" height="80" viewBox="0 0 34 80">
  <g id="spd"><rect x=".5" y="1.5" width="11" height="12" fill="#ece9d8" stroke="#222" stroke-width="1"/><path d="M1,7.5 h10" stroke="#222" stroke-width="1.4"/><path d="M3,6 L6,3 L9,6 Z M3,9.500 L6,12.500 L9,9.500 Z" fill="#c8c4b4"/></g>
  <use href="#spd" y="62"/>
  <g id="spe"><rect x="18.500" y="23.500" width="11" height="12" fill="#ece9d8" stroke="#222" stroke-width="1"/><path d="M19,29.500 h10" stroke="#222" stroke-width="1.400"/><path d="M21,28 L24,24.500 L27,28 Z M21,31 L24,34.500 L27,31 Z" fill="#000"/></g>
  <use href="#spe" y="20"/>
  <g id="fxi"><path d="M15,6 L22,1 L31,3 L31,14 L24,19 L15,17 Z" fill="#d8d4c4" stroke="#222" stroke-width="1.2"/><path d="M15,6 L24,8 L31,3 M24,8 L24,19" stroke="#222" stroke-width="1"/><rect x="16.500" y="9" width="5" height="7" fill="#f4e870" stroke="#222" stroke-width=".8"/><circle cx="27" cy="9" r="2.500" fill="#888" stroke="#222" stroke-width=".8"/><rect x="25" y="11" width="4" height="5" fill="#aaa" stroke="#222" stroke-width=".6"/></g>
  <use href="#fxi" y="62"/>
 </svg>
 <!-- radios -->
 <div class="abs" style="left:567px;top:445px;width:9px;height:9px;border-radius:50%;background:radial-gradient(circle at 35% 30%,#88a8e8,#203c98 55%,#101c60)"></div>
 <span class="t" style="left:580px;top:442px;transform:scaleX(.86)">Right-Threaded</span>
 <div class="abs" style="left:657px;top:445px;width:9px;height:9px;border-radius:50%;background:#fff;border:1px solid #333"></div>
 <span class="t" style="left:670px;top:442px;transform:scaleX(.86)">Left-Threaded</span>
 <!-- preview picture -->
 <svg class="abs" style="left:800px;top:288px" width="73" height="73" viewBox="0 0 73 73">
  <rect width="73" height="73" fill="#2a2a64"/>
  <defs><clipPath id="pc"><rect x="10" y="8" width="54" height="57"/></clipPath></defs>
  <g clip-path="url(#pc)" stroke="#dcdcec" stroke-width=".8"><path d="M-56,70 L14,0 M-49,70 L21,0 M-42,70 L28,0 M-35,70 L35,0 M-28,70 L42,0 M-21,70 L49,0 M-14,70 L56,0 M-7,70 L63,0 M0,70 L70,0 M7,70 L77,0 M14,70 L84,0 M21,70 L91,0 M28,70 L98,0 M35,70 L105,0 M42,70 L112,0 M49,70 L119,0 M56,70 L126,0 M63,70 L133,0"/></g>
  <rect x="30" y="8" width="13" height="48" fill="#2a2a64"/>
  <rect x="10" y="8" width="54" height="57" fill="none" stroke="#fff" stroke-width="1.4"/>
  <path d="M30,8 L30,52 L34,58 L39,58 L43,52 L43,8" fill="#2a2a64" stroke="#fff" stroke-width="1.6"/>
  <path d="M30,47 L43,47 M30,52 L43,52" stroke="#fff" stroke-width="1.4"/>
  <path d="M36.500,10 L36.500,20 M36.500,24 L36.500,30 M36.500,34 L36.500,44 M36.500,60 L36.500,70" stroke="#d0d0e0" stroke-width="1"/>
  <g stroke="#d8c818" stroke-width="1" fill="none"><path d="M5,8 L5,50 M3,11 L5,7 L7,11 M3,47 L5,51 L7,47 M5,51 L68,51 M68,8 L68,48 M66,11 L68,7 L70,11 M66,45 L68,49 L70,45 M31,3 L42,3 M33,1.500 L31,3 L33,4.500 M40,1.500 L42,3 L40,4.500 M31,1 L31,7 M42,1 L42,7"/><path d="M27,49 Q36,40 46,49" /><path d="M26,46 L27,50 L31,49 M47,46 L46,50 L42,49"/></g>
 </svg>
 <!-- standards -->
 <div class="grp" style="left:793px;top:368px;width:88px;height:93px"></div>
 <span class="t" style="left:798px;top:360px;background:#fce6c3;padding:0 3px;transform:scaleX(.86)">Standards</span>
 <div class="cbt" style="left:795px;top:376px;width:84px;height:13px"><span class="t" style="left:0;right:0;top:-1px;text-align:center;transform:scaleX(.86);transform-origin:50% 50%">Add</span></div>
 <div class="cbt" style="left:795px;top:400px;width:84px;height:13px"><span class="t" style="left:0;right:0;top:-1px;text-align:center;transform:scaleX(.86);transform-origin:50% 50%">Remove</span></div>
 <!-- bottom buttons -->
 <div class="cbt" style="left:696px;top:479px;width:60px;height:17px;border-color:#101018;box-shadow:inset 1px 1px 0 #fafaff,inset -1px -1px 0 #60607c"><span class="t" style="left:30px;top:1px;transform:scaleX(.95)">OK</span><i class="abs" style="left:5px;top:3px;width:10px;height:10px;border-radius:50%;background:radial-gradient(circle at 35% 30%,#b8ffb8,#18b018 50%,#086008)"></i></div>
 <div class="cbt" style="left:762px;top:480px;width:61px;height:15px"><span class="t" style="left:20px;top:0px;transform:scaleX(.86)">Cancel</span><i class="abs" style="left:5px;top:2px;width:10px;height:10px;border-radius:50%;background:radial-gradient(circle at 35% 30%,#ffc0b8,#d82020 50%,#700808)"></i></div>
 <div class="cbt" style="left:828px;top:480px;width:61px;height:15px"><span class="t" style="left:0;right:0;top:0px;text-align:center;transform:scaleX(.86);transform-origin:50% 50%">Preview</span></div>
</div>
<div class="ftb" style="left:896px;top:324px;width:64px;height:46px"><span class="ttl">Remo...</span><i class="fx" style="left:48px"></i><div class="body"><i class="grip"></i></div></div><svg class="abs" style="left:912px;top:349px" width="17" height="15" viewBox="0 0 18 18" preserveAspectRatio="none"><path d="M2,7 L10,3 L17,5 L9,9 Z" fill="#108878" stroke="#181830"/><path d="M9,9 L17,5 L17,12 L9,16 Z" fill="#f0e840" stroke="#181830"/><path d="M2,7 L9,9 L9,16 L2,14 Z" fill="#f8a020" stroke="#181830"/><path d="M3.500,9.500 L7.500,14 M7.500,10.500 L3.500,13" stroke="#d01010" stroke-width="1.400"/></svg><svg class="abs" style="left:934px;top:347px" width="18" height="18" viewBox="0 0 18 18" preserveAspectRatio="none"><path d="M2,13 L16,13 L16,16 L2,16 Z" fill="#f0e070" stroke="#111"/><path d="M3,12 L3,5 Q9,0 16,4 L16,10 Q10,7 3,12 Z" fill="#78d0e8" stroke="#1a5a8a" stroke-width="1"/><path d="M9,13 V5 M6.500,7.500 L9,4.500 L11.500,7.500" stroke="#111" stroke-width="1.300" fill="none"/><path d="M5,13 H13 V11 H5 Z" fill="#fff" stroke="#111" stroke-width=".8"/></svg>
<div class="ftb" style="left:163px;top:568px;width:161px;height:49px"><span class="ttl">2D Visualization Mode</span><i class="fx" style="left:145px"></i><div class="body"><i class="grip"></i></div></div><svg class="abs" style="left:180px;top:591px" width="17" height="17" viewBox="0 0 18 18" preserveAspectRatio="none"><path d="M3,4.500 L6,1.500 L15,1.500 L12,4.500 Z" fill="#a0ecf8" stroke="#103040" stroke-width="1"/><path d="M12,4.500 L15,1.500 L15,13.500 L12,16.500 Z" fill="#2090b0" stroke="#103040" stroke-width="1"/><rect x="3" y="4.500" width="9" height="12" rx="1" fill="#50d0e8" stroke="#103040" stroke-width="1.200"/><path d="M5.500,6 V15" stroke="#c8f8ff" stroke-width="1.300" opacity=".8"/><path d="M0,9 H3 M12,9 H18 M0,12.500 H3 M12,12.500 H18" stroke="#185848" stroke-width="1"/><path d="M3,9 H12 M3,12.500 H12" stroke="#e0ffff" stroke-width=".8" opacity=".7"/></svg><svg class="abs" style="left:202px;top:591px" width="17" height="17" viewBox="0 0 18 18" preserveAspectRatio="none"><path d="M3,4.500 L6,1.500 L15,1.500 L12,4.500 Z M12,4.500 L15,1.500 L15,13.500 L12,16.500 M3,4.500 H12 V16.500 H3 Z" fill="none" stroke="#9a9aa8" stroke-width="1" stroke-dasharray="1.500 1"/><path d="M0,9 H18 M0,12.500 H18" stroke="#eef6f4" stroke-width="1.600"/><path d="M1,10.700 H17" stroke="#a8c0b8" stroke-width=".8"/></svg><svg class="abs" style="left:225px;top:591px" width="17" height="17" viewBox="0 0 18 18" preserveAspectRatio="none"><path d="M3,4.500 L6,1.500 L15,1.500 L12,4.500 Z" fill="#a0ecf8" stroke="#103040" stroke-width="1"/><path d="M12,4.500 L15,1.500 L15,13.500 L12,16.500 Z" fill="#2090b0" stroke="#103040" stroke-width="1"/><rect x="3" y="4.500" width="9" height="12" rx="1" fill="#50d0e8" stroke="#103040" stroke-width="1.200"/><path d="M5.500,6 V15" stroke="#c8f8ff" stroke-width="1.300" opacity=".8"/><path d="M0,9 H3 M12,9 H18 M0,12.500 H3 M12,12.500 H18" stroke="#185848" stroke-width="1"/><path d="M3,9 H12 M3,12.500 H12" stroke="#e0ffff" stroke-width=".8" opacity=".7"/><circle cx="12.500" cy="13.500" r="3.400" fill="#d82020" stroke="#801010" stroke-width=".6"/><rect x="10.300" y="12.800" width="4.400" height="1.500" fill="#fff"/></svg><svg class="abs" style="left:247px;top:591px" width="17" height="17" viewBox="0 0 18 18" preserveAspectRatio="none"><g opacity=".8"><path d="M3,4.500 L6,1.500 L15,1.500 L12,4.500 Z" fill="#68b89c" stroke="#2a6a54" stroke-width="1"/><path d="M12,4.500 L15,1.500 L15,13.500 L12,16.500 Z" fill="#388468" stroke="#2a6a54" stroke-width="1"/><rect x="3" y="4.500" width="9" height="12" rx="1" fill="#4a9c80" stroke="#2a6a54" stroke-width="1.200"/><path d="M5.500,6 V15" stroke="#c8f8ff" stroke-width="1.300" opacity=".8"/><path d="M0,9 H3 M12,9 H18 M0,12.500 H3 M12,12.500 H18" stroke="#185848" stroke-width="1"/><path d="M3,9 H12 M3,12.500 H12" stroke="#e0ffff" stroke-width=".8" opacity=".7"/></g></svg><svg class="abs" style="left:270px;top:591px" width="17" height="17" viewBox="0 0 18 18" preserveAspectRatio="none"><g opacity=".8"><path d="M3,4.500 L6,1.500 L15,1.500 L12,4.500 Z" fill="#68b89c" stroke="#2a6a54" stroke-width="1"/><path d="M12,4.500 L15,1.500 L15,13.500 L12,16.500 Z" fill="#388468" stroke="#2a6a54" stroke-width="1"/><rect x="3" y="4.500" width="9" height="12" rx="1" fill="#4a9c80" stroke="#2a6a54" stroke-width="1.200"/><path d="M5.500,6 V15" stroke="#c8f8ff" stroke-width="1.300" opacity=".8"/><path d="M0,9 H3 M12,9 H18 M0,12.500 H3 M12,12.500 H18" stroke="#185848" stroke-width="1"/><path d="M3,9 H12 M3,12.500 H12" stroke="#e0ffff" stroke-width=".8" opacity=".7"/></g><circle cx="12.500" cy="13.500" r="3.400" fill="#d82020" stroke="#801010" stroke-width=".6"/><rect x="10.300" y="12.800" width="4.400" height="1.500" fill="#fff"/></svg><svg class="abs" style="left:297px;top:591px" width="18" height="17" viewBox="0 0 18 18" preserveAspectRatio="none"><path d="M1,8 Q8,1 15,7 M2,10 Q8,4 14,9 M4,5 L2,2 M8,3.500 L8,1 M12,4.500 L14,2" stroke="#b0aa98" stroke-width="1.200" fill="none"/><circle cx="8" cy="8.500" r="2.400" fill="#b8b4a4"/><path d="M7,12 L12,10 L16,12 L16,16 L11,18 L7,16 Z" fill="#d4d0c0" stroke="#a8a494" stroke-width="1"/></svg><i class="sep" style="left:292px;top:589px;width:1px;height:22px"></i>
<div class="ftb" style="left:329px;top:568px;width:199px;height:49px"><span class="ttl">Quick view</span><i class="fx" style="left:183px"></i><div class="body"><i class="grip"></i></div></div><svg class="abs" style="left:345px;top:591px" width="18" height="18" viewBox="0 0 18 18" preserveAspectRatio="none"><path d="M2,6 L11,6 L11,16 L2,16 Z" fill="#40d4f4" stroke="#1030a0" stroke-width="1.1"/><path d="M2,6 L6,2 L15,2 L11,6 Z" fill="#58e0fc" stroke="#1030a0" stroke-width="1.1"/><path d="M11,6 L15,2 L15,12 L11,16 Z" fill="#30c4e8" stroke="#1030a0" stroke-width="1.1"/></svg><svg class="abs" style="left:367.6px;top:591px" width="18" height="18" viewBox="0 0 18 18" preserveAspectRatio="none"><path d="M2,6 L11,6 L11,16 L2,16 Z" fill="#58d0f0" stroke="#14141c" stroke-width="1"/><path d="M2,6 L6,2 L15,2 L11,6 Z" fill="#fff" stroke="#14141c" stroke-width="1"/><path d="M11,6 L15,2 L15,12 L11,16 Z" fill="#fff" stroke="#14141c" stroke-width="1"/></svg><svg class="abs" style="left:390.2px;top:591px" width="18" height="18" viewBox="0 0 18 18" preserveAspectRatio="none"><path d="M2,6 L11,6 L11,16 L2,16 Z M2,6 L6,2 L15,2 L11,6 M15,2 L15,12 L11,16 M6,2 L6,12 L2,16 M6,12 L15,12" fill="none" stroke="#222" stroke-width="1"/><path d="M6,2 L15,2 L15,12 L6,12 Z" fill="#58d0f0" fill-opacity=".8"/><path d="M2,6 L11,6 L11,16 L2,16 Z M2,6 L6,2 L15,2 L11,6 M15,2 L15,12 L11,16 M6,2 L6,12 L2,16 M6,12 L15,12" fill="none" stroke="#222" stroke-width="1"/></svg><svg class="abs" style="left:412.8px;top:591px" width="18" height="18" viewBox="0 0 18 18" preserveAspectRatio="none"><path d="M2,6 L6,2 L6,12 L2,16 Z" fill="#58d0f0"/><path d="M2,6 L11,6 L11,16 L2,16 Z M2,6 L6,2 L15,2 L11,6 M15,2 L15,12 L11,16 M6,2 L6,12 L2,16 M6,12 L15,12" fill="none" stroke="#222" stroke-width="1"/></svg><svg class="abs" style="left:435.4px;top:591px" width="18" height="18" viewBox="0 0 18 18" preserveAspectRatio="none"><path d="M11,6 L15,2 L15,12 L11,16 Z" fill="#58d0f0"/><path d="M2,6 L11,6 L11,16 L2,16 Z M2,6 L6,2 L15,2 L11,6 M15,2 L15,12 L11,16 M6,2 L6,12 L2,16 M6,12 L15,12" fill="none" stroke="#222" stroke-width="1"/></svg><svg class="abs" style="left:458px;top:591px" width="18" height="18" viewBox="0 0 18 18" preserveAspectRatio="none"><path d="M2,6 L6,2 L15,2 L11,6 Z" fill="#58d0f0"/><path d="M2,6 L11,6 L11,16 L2,16 Z M2,6 L6,2 L15,2 L11,6 M15,2 L15,12 L11,16 M6,2 L6,12 L2,16 M6,12 L15,12" fill="none" stroke="#222" stroke-width="1"/></svg><svg class="abs" style="left:480.6px;top:591px" width="18" height="18" viewBox="0 0 18 18" preserveAspectRatio="none"><path d="M2,16 L6,12 L15,12 L11,16 Z" fill="#58d0f0"/><path d="M2,6 L11,6 L11,16 L2,16 Z M2,6 L6,2 L15,2 L11,6 M15,2 L15,12 L11,16 M6,2 L6,12 L2,16 M6,12 L15,12" fill="none" stroke="#222" stroke-width="1"/></svg><svg class="abs" style="left:503.2px;top:591px" width="18" height="18" viewBox="0 0 18 18" preserveAspectRatio="none"><rect x="1" y="1" width="13" height="12" rx="2" fill="none" stroke="#30b8c8" stroke-width="2"/><rect x="4.500" y="5.500" width="12" height="11" fill="#e8e4d0" stroke="#111" stroke-width="1.400"/><rect x="7" y="8" width="4" height="3" fill="#111"/><rect x="12" y="8" width="2" height="2" fill="#2858c8"/><path d="M7,14 H14" stroke="#111"/></svg>
<div class="ftb" style="left:540px;top:568px;width:109px;height:49px"><span class="ttl">Product Knowl...</span><i class="fx" style="left:93px"></i><div class="body"><i class="grip"></i></div></div><svg class="abs" style="left:555px;top:591px" width="18" height="18" viewBox="0 0 18 18" preserveAspectRatio="none"><path d="M2,11 L8,6 L17,9 L10,15 Z" fill="#f0e878" stroke="#111" stroke-width="1.200"/><path d="M2,11 V14 L10,18 V15 M10,18 L17,12 V9" fill="#fff" stroke="#111"/><path d="M4,4 L8,2 L10,9 L6,10 Z" fill="#f0e878" stroke="#111"/><path d="M16,1 L8,10" stroke="#1840b0" stroke-width="2"/></svg><svg class="abs" style="left:579px;top:591px" width="18" height="18" viewBox="0 0 18 18" preserveAspectRatio="none"><path d="M2,9 L6,6 L8,9 L12,6 L16,9 V16 H2 Z" fill="#f0e060" stroke="#111" stroke-width="1.200"/><rect x="5" y="12" width="2.500" height="4" fill="#fff" stroke="#111" stroke-width=".8"/><rect x="10" y="12" width="2.500" height="4" fill="#fff" stroke="#111" stroke-width=".8"/><path d="M5,6 Q5,1 11,2 M9,1 L11.500,2 L9.500,4" stroke="#555" stroke-width="1.300" fill="none"/></svg><svg class="abs" style="left:601px;top:591px" width="18" height="18" viewBox="0 0 18 18" preserveAspectRatio="none"><path d="M3,1 H12 L15,4 V13 H3 Z" fill="#f4f4e8" stroke="#888" stroke-width="1"/><path d="M5,11 L8,9 L10,11 L13,9 L16,11 V17 H5 Z" fill="#f0e060" stroke="#111" stroke-width="1.200"/><rect x="7.500" y="13.500" width="2" height="3.500" fill="#fff" stroke="#111" stroke-width=".7"/><rect x="12" y="13.500" width="2" height="3.500" fill="#fff" stroke="#111" stroke-width=".7"/></svg><svg class="abs" style="left:624px;top:591px" width="18" height="18" viewBox="0 0 18 18" preserveAspectRatio="none"><rect x="2" y="2" width="14" height="14" fill="#c8dcf8" stroke="#1840b0" stroke-width="1.400"/><path d="M5,6 H14 M5,6 V14 M8,9 H14 M8,9 L5,14 M14,9 L9,14 H5" stroke="#1840b0" stroke-width="1.200" fill="none"/></svg>
<div class="ftb" style="left:659px;top:569px;width:64px;height:49px"><span class="ttl">Produ...</span><i class="fx" style="left:48px"></i><div class="body"><i class="grip"></i></div></div><svg class="abs" style="left:674px;top:592px" width="18" height="18" viewBox="0 0 18 18" preserveAspectRatio="none"><path d="M6,13 L11,9 L18,11 L12,16 Z" fill="#f0e878" stroke="#111" stroke-width="1"/><path d="M6,13 V15 L12,18 V16 M12,18 L18,13 V11" fill="#d8d080" stroke="#111" stroke-width=".8"/><path d="M1,3 H7 L10,6 L4,8 Z" fill="#f0e070" stroke="#111" stroke-width="1"/><path d="M9,3 Q15,3 15,8 M13,7 L15,9 L17,6.500" stroke="#1840b0" stroke-width="1.200" fill="none"/></svg><svg class="abs" style="left:696px;top:591px" width="19" height="18" viewBox="0 0 18 18" preserveAspectRatio="none"><path d="M6,13 L11,9 L18,11 L12,16 Z" fill="#f0e878" stroke="#111" stroke-width="1"/><path d="M6,13 V15 L12,18 V16 M12,18 L18,13 V11" fill="#d8d080" stroke="#111" stroke-width=".8"/><path d="M2,1 L2,11 L5,8.500 L7,12 L9,11 L7,7.500 L10,7 Z" fill="#f0e850" stroke="#111" stroke-width="1"/><path d="M10,3 Q15,3 15,8 M13,7 L15,9 L17,6.500" stroke="#1840b0" stroke-width="1.200" fill="none"/></svg>
<div id="rtb"><i class="abs" style="left:0;top:0;width:3px;height:100%;background:linear-gradient(90deg,#f8f8ff,#dcdcf0)"></i></div>
<div id="btb"><i class="abs" style="left:0;top:0;width:100%;height:3px;background:linear-gradient(#fff,#e8e8f6)"></i><i class="abs" style="left:963px;top:0;width:61px;height:4px;background:#cfcfe7"></i></div>
<svg class="abs" style="left:971px;top:15px" width="18" height="18" viewBox="0 0 18 18" preserveAspectRatio="none"><path d="M1,3 h4 v10 h-4 Z M1,3 l2.5,-2 h4 l-2.5,2 M7.5,1 v10 l-2.5,2" fill="none" stroke="#333" stroke-width=".9" stroke-dasharray="1.4 1"/><path d="M10,8 h4 v9 h-4 Z" fill="#58a8f8" stroke="#0c1c58" stroke-width=".9"/><path d="M11.8,9 v7" stroke="#e0f0ff" stroke-width="1.2"/><path d="M10,8 l2.5,-2 h4 l-2.5,2 Z" fill="#c8e4ff" stroke="#0c1c58" stroke-width=".8"/><path d="M14,8 l2.5,-2 v9 l-2.5,2 Z" fill="#102c80" stroke="#0c1c58" stroke-width=".8"/><path d="M4,14 L9,17 M9,17 l-3,-.3 M9,17 l-1,-2.600" stroke="#000" stroke-width="1" fill="none"/></svg>
<i class="dd" style="left:986px;top:34px"></i>
<svg class="abs" style="left:971px;top:45px" width="18" height="17" viewBox="0 0 18 18" preserveAspectRatio="none"><path d="M0,4 h4 v9 h-4 Z" fill="#58a8f8" stroke="#0c1c58" stroke-width=".9"/><path d="M1.8,5 v7" stroke="#e0f0ff" stroke-width="1.2"/><path d="M0,4 l2.5,-2 h4 l-2.5,2 Z" fill="#c8e4ff" stroke="#0c1c58" stroke-width=".8"/><path d="M4,4 l2.5,-2 v9 l-2.5,2 Z" fill="#102c80" stroke="#0c1c58" stroke-width=".8"/><path d="M6,6 L12,1 L12,13 L6,18 Z" fill="#f4f080" stroke="#8a8a40" stroke-width=".7"/><path d="M11,8 h4 v9 h-4 Z" fill="#58a8f8" stroke="#0c1c58" stroke-width=".9"/><path d="M12.8,9 v7" stroke="#e0f0ff" stroke-width="1.2"/><path d="M11,8 l2.5,-2 h4 l-2.5,2 Z" fill="#c8e4ff" stroke="#0c1c58" stroke-width=".8"/><path d="M15,8 l2.5,-2 v9 l-2.5,2 Z" fill="#102c80" stroke="#0c1c58" stroke-width=".8"/></svg>
<svg class="abs" style="left:972px;top:69px" width="16" height="17" viewBox="0 0 18 18" preserveAspectRatio="none"><path d="M3,3 H15 M3,9 H15 M3,15 H15 M3,3 V15 M9,3 V15 M15,3 V15" stroke="#2030b0" stroke-width=".9"/><path d="M1.4,3 l1.600,-1.600 l1.600,1.600 l-1.600,1.600 Z" fill="#b8c0ff" stroke="#1c1ca0" stroke-width="1.1"/><path d="M1.4,9 l1.600,-1.600 l1.600,1.600 l-1.600,1.600 Z" fill="#b8c0ff" stroke="#1c1ca0" stroke-width="1.1"/><path d="M1.4,15 l1.600,-1.600 l1.600,1.600 l-1.600,1.600 Z" fill="#b8c0ff" stroke="#1c1ca0" stroke-width="1.1"/><path d="M7.4,3 l1.600,-1.600 l1.600,1.600 l-1.600,1.600 Z" fill="#b8c0ff" stroke="#1c1ca0" stroke-width="1.1"/><path d="M7.4,9 l1.600,-1.600 l1.600,1.600 l-1.600,1.600 Z" fill="#b8c0ff" stroke="#1c1ca0" stroke-width="1.1"/><path d="M7.4,15 l1.600,-1.600 l1.600,1.600 l-1.600,1.600 Z" fill="#b8c0ff" stroke="#1c1ca0" stroke-width="1.1"/><path d="M13.4,3 l1.600,-1.600 l1.600,1.600 l-1.600,1.600 Z" fill="#b8c0ff" stroke="#1c1ca0" stroke-width="1.1"/><path d="M13.4,9 l1.600,-1.600 l1.600,1.600 l-1.600,1.600 Z" fill="#b8c0ff" stroke="#1c1ca0" stroke-width="1.1"/><path d="M13.4,15 l1.600,-1.600 l1.600,1.600 l-1.600,1.600 Z" fill="#b8c0ff" stroke="#1c1ca0" stroke-width="1.1"/></svg>
<i class="dd" style="left:986px;top:87px"></i>
<svg class="abs" style="left:972px;top:101px" width="15" height="15" viewBox="0 0 18 18" preserveAspectRatio="none"><circle cx="9" cy="9" r="4.500" fill="#68d868" stroke="#186018" stroke-width="1.2"/><path d="M1,5 V1 H5 M13,1 H17 V5 M17,13 V17 H13 M5,17 H1 V13" fill="none" stroke="#111" stroke-width="1.600"/><path d="M2,2 L5,5 M16,2 L13,5 M16,16 L13,13 M2,16 L5,13" stroke="#111" stroke-width="1"/></svg>
<svg class="abs" style="left:971px;top:141px" width="17" height="16" viewBox="0 0 18 18" preserveAspectRatio="none"><path d="M6,1 H15 V13 H6 Z" fill="#fff" stroke="#14144c" stroke-width="1.2"/><path d="M15.600,2 V14 H7" stroke="#14144c" stroke-width="2.200" fill="none"/><path d="M1,8 L4,5 H10 L7,8 Z" fill="#fbf8c8" stroke="#14144c" stroke-width=".9"/><path d="M7,8 L10,5 V10 L7,13 Z" fill="#c8c060" stroke="#14144c" stroke-width=".9"/><path d="M1,8 H7 V13 H1 Z" fill="#f4ee90" stroke="#14144c" stroke-width=".9"/></svg>
<i class="dd" style="left:986px;top:158px"></i>
<svg class="abs" style="left:971px;top:166px" width="16" height="17" viewBox="0 0 18 18" preserveAspectRatio="none"><path d="M2,2 H14 V15 H2 Z" fill="#f0eca0" stroke="#14144c" stroke-width="1.300"/><path d="M15,3 V16.200 H3" stroke="#14144c" stroke-width="2.400" fill="none"/><path d="M5,6 H9 V9 H12 V12.500 H5 Z" fill="#fff" stroke="#14144c" stroke-width="1.300"/></svg>
<i class="dd" style="left:986px;top:184px"></i>
<svg class="abs" style="left:971px;top:190px" width="17" height="17" viewBox="0 0 18 18" preserveAspectRatio="none"><path d="M2,5 Q2,2 5,2 L8,3 V15 L5,16 Q2,15 2,11 Z" fill="#2c64a8" stroke="#101040"/><path d="M4,4 Q3,8 4,14" stroke="#78b0e8" stroke-width="1.400" fill="none"/><path d="M10,3 L13,2 Q16,3 16,6 V11 Q16,15 13,16 L10,15 Z" fill="#2c64a8" stroke="#101040"/><path d="M12,8 H15.500 V13.500 L12,15.500 Z" fill="#f0e878" stroke="#101040" stroke-width=".8"/><path d="M9,0 V18" stroke="#111" stroke-width="1.200"/></svg>
<svg class="abs" style="left:971px;top:212px" width="17" height="17" viewBox="0 0 18 18" preserveAspectRatio="none"><path d="M2,4.500 V13.500 Q9,18 16,13.500 V4.500 Z" fill="#f0dc58" stroke="#181830" stroke-width="1.200"/><path d="M7,8 H16 V11.500 H7 Z" fill="#7a3028" stroke="#181830" stroke-width=".8"/><path d="M7,8 H12 V10 H7 Z" fill="#2848a0"/><ellipse cx="9" cy="4.500" rx="7" ry="3" fill="#58d0e8" stroke="#181830" stroke-width="1.200"/></svg>
<svg class="abs" style="left:972px;top:236px" width="16" height="16" viewBox="0 0 18 18" preserveAspectRatio="none"><rect x="1" y="1" width="16" height="16" fill="#f07818"/><rect x="2.500" y="2.500" width="11.500" height="11.500" fill="#fdf6f0"/><circle cx="7.500" cy="9" r="3.300" fill="#f0a070" stroke="#d06828" stroke-width="1"/></svg>
<svg class="abs" style="left:971px;top:258px" width="17" height="15" viewBox="0 0 18 18" preserveAspectRatio="none"><path d="M2,12 L5,9 L8,9 L8,12 L16,12 L16,16 L2,16 Z" fill="#fff" stroke="#181830" stroke-width="1.300"/><path d="M5,9 L12,2 L16,3 L9,10 L8,12 L8,9 Z" fill="#f0e070" stroke="#181830" stroke-width="1"/><path d="M9,10 L16,3 L16,6 L10,12" fill="#c8b850" stroke="#181830" stroke-width="1"/></svg>
<svg class="abs" style="left:971px;top:279px" width="17" height="17" viewBox="0 0 18 18" preserveAspectRatio="none"><path d="M2,9 L8,3 L11,3 L6,9 L6,13 L12,13 L12,9 L16,5 L16,12 L12,16 L2,16 Z" fill="#fff" stroke="#181830" stroke-width="1.300"/><path d="M2,9 L8,3 L11,3 L5,9.500 L5,16 L2,16 Z" fill="#20308c" stroke="#181830" stroke-width=".8"/><path d="M8,3 L11,3 L6,8.500 L4,8 Z" fill="#f0e8a0" stroke="#181830" stroke-width=".7"/><path d="M12,9 L16,5 L16,12 L12,16 Z" fill="#20308c" stroke="#181830" stroke-width=".8"/></svg>
<svg class="abs" style="left:971px;top:303px" width="15" height="15" viewBox="0 0 18 18" preserveAspectRatio="none"><path d="M1,6 L8,1 L17,4 L10,9 Z" fill="#48d8e8" stroke="#181830" stroke-width="1" stroke-linejoin="round"/><path d="M1,6 L10,9 L10,17 L1,13.500 Z" fill="#f0e840" stroke="#181830" stroke-width="1" stroke-linejoin="round"/><path d="M10,9 L17,4 L17,12 L10,17 Z" fill="#181830" stroke="#181830" stroke-width="1" stroke-linejoin="round"/><rect x="12" y="9.500" width="3" height="3" fill="#fff"/></svg>
<i class="dd" style="left:986px;top:319px"></i>
<svg class="abs" style="left:971px;top:326px" width="17" height="15" viewBox="0 0 18 18" preserveAspectRatio="none"><path d="M2,13 L8,6 L16,6 L16,10 L10,16 L2,16 Z" fill="#fff" stroke="#181830" stroke-width="1.300"/><path d="M5,9 Q8,1 11,3 Q14,5 13,10 Q11,7 9,8 Q7,9 7,12 Z" fill="#f0e450" stroke="#181830" stroke-width=".9"/></svg>
<svg class="abs" style="left:971px;top:349px" width="17" height="15" viewBox="0 0 18 18" preserveAspectRatio="none"><path d="M2,10 L7,5 L16,5 L16,10 L10,16 L2,16 Z" fill="#fff" stroke="#181830" stroke-width="1.300"/><path d="M5,8 Q8,13 14,5 L13,9 Q10,15 6,13 Z" fill="#48c8e0" stroke="#1a5a8a" stroke-width=".9"/></svg>
<svg class="abs" style="left:971px;top:386px" width="17" height="17" viewBox="0 0 18 18" preserveAspectRatio="none"><path d="M1,6 L8,1 L17,4 L10,9 Z" fill="#fff" stroke="#181830" stroke-width="1" stroke-linejoin="round"/><path d="M1,6 L10,9 L10,17 L1,13.500 Z" fill="#f0e878" stroke="#181830" stroke-width="1" stroke-linejoin="round"/><path d="M10,9 L17,4 L17,12 L10,17 Z" fill="#58c0d0" stroke="#181830" stroke-width="1" stroke-linejoin="round"/><rect x="11.500" y="1" width="5" height="5" fill="#fff" stroke="#181830" stroke-width="1"/><rect x="13" y="2.500" width="2" height="2" fill="#181830"/><path d="M2,2 L9,7" stroke="#181830"/><path d="M3,2 L11,2" stroke="#181830" stroke-width=".8"/></svg>
<svg class="abs" style="left:971px;top:408px" width="17" height="16" viewBox="0 0 18 18" preserveAspectRatio="none"><path d="M1,6 Q4,2 8,3 Q13,5 17,3 L17,8 Q13,10 8,8 Q4,7 1,10 Z" fill="#58c8f0" stroke="#1a5a9a" stroke-width="1"/><path d="M1,10 Q4,7 8,8 Q13,10 17,8 L17,11 Q13,13 8,11 Q4,10 1,13 Z" fill="#f4ec90" stroke="#777" stroke-width=".8"/><path d="M1,13 Q4,10 8,11 Q13,13 17,11 L17,14 Q13,17 8,15 Q4,14 1,16 Z" fill="#f0e070" stroke="#555" stroke-width=".9"/></svg>
<svg class="abs" style="left:971px;top:433px" width="17" height="16" viewBox="0 0 18 18" preserveAspectRatio="none"><path d="M2,11 Q3,4 10,2 L15,2 Q18,5 15,10 L8,16 Q3,16 2,11 Z" fill="#38a8f0" stroke="#102078" stroke-width="1.200"/><ellipse cx="5.500" cy="12.500" rx="3" ry="4" fill="#f0d8c0" stroke="#102078" transform="rotate(-30 5.500 12.500)"/></svg>
<svg class="abs" style="left:971px;top:454px" width="17" height="18" viewBox="0 0 18 18" preserveAspectRatio="none"><path d="M2,4 L13,2 L16,4 L16,16 L5,17 L2,15 Z" fill="#108880" stroke="#101828" stroke-width="1.200"/><path d="M5,5 L15,4 L15,15 L5,16 Z" fill="#20b0a0" stroke="#085048" stroke-width=".8"/><path d="M9,6 L8,7.500 L9,9 L8,10.500 L9,12 L8,13.500 L10,15 L12,13.500 L13,12 L12,10.500 L13,9 L12,7.500 L12.500,6 Z" fill="#f8f070"/></svg>
<svg class="abs" style="left:1003px;top:13px" width="16" height="17" viewBox="0 0 18 18" preserveAspectRatio="none"><path d="M0,5 L17,1 L17,13 L0,17 Z" fill="#9cd4c8" opacity=".7"/><circle cx="10" cy="8" r="5.600" fill="none" stroke="#303040" stroke-width="2" stroke-dasharray="2.200 2.200"/><circle cx="10" cy="8" r="4.300" fill="#c4d8dc" stroke="#303040" stroke-width="1.400"/><circle cx="10" cy="8" r="1.900" fill="#cfcfe7" stroke="#303040" stroke-width="1.100"/></svg>
<svg class="abs" style="left:1004px;top:53px" width="14" height="17" viewBox="0 0 18 18" preserveAspectRatio="none"><path d="M2,0 L2,15 L6,11.500 L9,18 L12,16.500 L9,10.500 L14.500,10.500 Z" fill="#f4f060" stroke="#20204c" stroke-width="1.300" stroke-linejoin="round"/></svg>
<i class="dd" style="left:1018px;top:71px"></i>
<svg class="abs" style="left:1002px;top:92px" width="17" height="17" viewBox="0 0 18 18" preserveAspectRatio="none"><path d="M1,7 H10 V17 H1 Z" fill="#fff" stroke="#111" stroke-width="1.300"/><path d="M1,9.500 H10 M1,12 H7 M1,14.500 H7" stroke="#111" stroke-width="1.300"/><path d="M10,17 L15,4 L17,17 Z" fill="#fff" stroke="#111" stroke-width="1"/><path d="M6,10 L14,1" stroke="#111" stroke-width="2"/><path d="M7,9 L14,1.500" stroke="#d8d8e8" stroke-width=".8"/></svg>
<i class="dd" style="left:1018px;top:110px"></i>
<svg class="abs" style="left:1003px;top:130px" width="16" height="16" viewBox="0 0 18 18" preserveAspectRatio="none"><rect x="7" y="7" width="4" height="4" fill="#182878"/><rect x="8" y="8" width="2" height="2" fill="#58a0f0"/></svg>
<svg class="abs" style="left:1003px;top:154px" width="16" height="14" viewBox="0 0 18 18" preserveAspectRatio="none"><path d="M1,17 L17,1" stroke="#1c1c78" stroke-width="1.400"/></svg>
<svg class="abs" style="left:1003px;top:177px" width="16" height="16" viewBox="0 0 18 18" preserveAspectRatio="none"><path d="M1,12 L7,5 L17,5 L11,12 Z" fill="#f4ec90" stroke="#282840" stroke-width="1"/></svg>
<svg class="abs" style="left:1003px;top:211px" width="16" height="16" viewBox="0 0 18 18" preserveAspectRatio="none"><path d="M1,6 L8,1 L17,4 L10,9 Z" fill="#58d0e8" stroke="#181830" stroke-width="1" stroke-linejoin="round"/><path d="M1,6 L10,9 L10,17 L1,13.500 Z" fill="#f0e840" stroke="#181830" stroke-width="1" stroke-linejoin="round"/><path d="M10,9 L17,4 L17,12 L10,17 Z" fill="#8890a0" stroke="#181830" stroke-width="1" stroke-linejoin="round"/></svg>
<svg class="abs" style="left:1003px;top:250px" width="17" height="16" viewBox="0 0 18 18" preserveAspectRatio="none"><path d="M3,7 Q5,2 10,2 Q15,2 16,6 L10,10 Z" fill="#e8c898" stroke="#181830" stroke-linejoin="round"/><path d="M3,7 L10,10 L10,16 L3,12 Z" fill="#3898a8" stroke="#181830" stroke-linejoin="round"/><path d="M10,10 L16,6 L16,12 L10,16 Z" fill="#b89878" stroke="#181830" stroke-linejoin="round"/></svg>
<i class="dd" style="left:1018px;top:267px"></i>
<svg class="abs" style="left:1003px;top:274px" width="16" height="15" viewBox="0 0 18 18" preserveAspectRatio="none"><path d="M2,8 L8,2 L13,3 L7,10 Z" fill="#f0d8a8" stroke="#181830" stroke-linejoin="round"/><path d="M2,8 L7,10 L9,16 L3,13 Z" fill="#e8c898" stroke="#181830" stroke-linejoin="round"/><path d="M7,10 L13,3 L16,6 L16,12 L9,16 Z" fill="#4a90c0" stroke="#181830" stroke-linejoin="round"/></svg>
<svg class="abs" style="left:1003px;top:295px" width="16" height="17" viewBox="0 0 18 18" preserveAspectRatio="none"><path d="M1,6 L8,1 L17,4 L10,9 Z" fill="#58d0e8" stroke="#181830" stroke-width="1" stroke-linejoin="round"/><path d="M1,6 L10,9 L10,17 L1,13.500 Z" fill="#f0f030" stroke="#181830" stroke-width="1" stroke-linejoin="round"/><path d="M10,9 L17,4 L17,12 L10,17 Z" fill="#707888" stroke="#181830" stroke-width="1" stroke-linejoin="round"/></svg>
<i class="dd" style="left:1018px;top:313px"></i>
<svg class="abs" style="left:1003px;top:319px" width="16" height="17" viewBox="0 0 18 18" preserveAspectRatio="none"><path d="M2,7 L8,2 L16,4 L14,13 L8,17 L4,15 Z" fill="#181840" stroke="#181830" stroke-width="1"/><path d="M3.500,7.500 L8.500,3.500 L11,4.500 L6.500,8.500 L8,15 L5,13.500 Z" fill="#2a9898"/><path d="M8,9 L13,5.500 L12,11.500 L9,14 Z" fill="#cfcfe7"/></svg>
<svg class="abs" style="left:1003px;top:341px" width="16" height="17" viewBox="0 0 18 18" preserveAspectRatio="none"><path d="M2,5 L8,3 L8,15 L2,16 Z" fill="#f4f0a0" stroke="#181830" stroke-width="1"/><path d="M8,3 L16,2 L16,13 L8,15 Z" fill="#fff" stroke="#181830" stroke-width="1"/><path d="M11,3 V14 M13.500,2.500 V13.500 M8,6 L16,5 M8,11 L16,10" stroke="#3868d0" stroke-width=".7" stroke-dasharray="1.200 .8"/><path d="M5,9.500 H14 M12,7.500 L14.500,9.500 L12,11.500" stroke="#181830" stroke-width="1.200" fill="none"/></svg>
<svg class="abs" style="left:1002px;top:364px" width="17" height="17" viewBox="0 0 18 18" preserveAspectRatio="none"><circle cx="9" cy="9" r="6" fill="#f4ecb0" stroke="#111" stroke-width="1.500"/><circle cx="9" cy="9" r="2.800" fill="#fff" stroke="#111" stroke-width="1.300"/><path d="M9,0 V18 M0,9 H18" stroke="#111" stroke-width="1.400"/></svg>
<svg class="abs" style="left:1003px;top:388px" width="16" height="15" viewBox="0 0 18 18" preserveAspectRatio="none"><path d="M2,7 L10,3 L17,5 L9,9 Z" fill="#108878" stroke="#181830"/><path d="M9,9 L17,5 L17,12 L9,16 Z" fill="#f0e840" stroke="#181830"/><path d="M2,7 L9,9 L9,16 L2,14 Z" fill="#f8a020" stroke="#181830"/><path d="M3.500,9.500 L7.500,14 M7.500,10.500 L3.500,13" stroke="#d01010" stroke-width="1.400"/></svg>
<i class="dd" style="left:1018px;top:404px"></i>
<svg class="abs" style="left:1003px;top:425px" width="18" height="16" viewBox="0 0 18 18" preserveAspectRatio="none"><path d="M5,5 L11,2 L17,5 L17,11 L11,14 L5,11 Z" fill="#d4d0b0" stroke="#303048" stroke-width="1"/><path d="M5,5 L11,8 L17,5 M11,8 V14" stroke="#303048" stroke-width=".8" fill="none"/><circle cx="5" cy="12.500" r="3.800" fill="#fbf4c0" stroke="#303048" stroke-width="1"/><circle cx="11.500" cy="12" r="3.200" fill="#f0e868" stroke="#303048" stroke-width="1"/><rect x="13" y="9" width="4" height="5" fill="#d4d0b0" stroke="#303048" stroke-width=".8"/></svg>
<svg class="abs" style="left:1003px;top:454px" width="18" height="16" viewBox="0 0 18 18" preserveAspectRatio="none"><path d="M5,5 L11,2 L17,5 L17,11 L11,14 L5,11 Z" fill="#f0a858" stroke="#303048" stroke-width="1"/><path d="M5,5 L11,8 L17,5 M11,8 V14" stroke="#303048" stroke-width=".8" fill="none"/><circle cx="5" cy="12.500" r="3.800" fill="#fbf4c0" stroke="#303048" stroke-width="1"/><circle cx="11.500" cy="12" r="3.200" fill="#f0e060" stroke="#303048" stroke-width="1"/><rect x="13" y="9" width="4" height="5" fill="#f0a858" stroke="#303048" stroke-width=".8"/></svg>
<i class="dd" style="left:1018px;top:471px"></i>
<svg class="abs" style="left:1003px;top:477px" width="18" height="16" viewBox="0 0 18 18" preserveAspectRatio="none"><path d="M5,5 L11,2 L17,5 L17,11 L11,14 L5,11 Z" fill="#58c0f0" stroke="#303048" stroke-width="1"/><path d="M5,5 L11,8 L17,5 M11,8 V14" stroke="#303048" stroke-width=".8" fill="none"/><circle cx="5" cy="12.500" r="3.800" fill="#fbf4c0" stroke="#303048" stroke-width="1"/><circle cx="11.500" cy="12" r="3.200" fill="#f0e060" stroke="#303048" stroke-width="1"/><rect x="13" y="9" width="4" height="5" fill="#58c0f0" stroke="#303048" stroke-width=".8"/></svg>
<svg class="abs" style="left:1002px;top:507px" width="19" height="17" viewBox="0 0 18 18" preserveAspectRatio="none"><ellipse cx="13" cy="7" rx="3.600" ry="4.400" fill="#1c98a0" stroke="#102030" stroke-width="1.100" transform="rotate(20 13 7)"/><ellipse cx="9.500" cy="9.500" rx="3" ry="4.200" fill="#fff" stroke="#102030" stroke-width="1" transform="rotate(20 9.500 9.500)"/><ellipse cx="5" cy="12" rx="3.600" ry="4.400" fill="#fbf4c0" stroke="#102030" stroke-width="1.100" transform="rotate(20 5 12)"/></svg>
<i class="sep" style="left:967px;top:5px;width:13px;height:1px"></i>
<i class="sep" style="left:967px;top:131px;width:13px;height:1px"></i>
<i class="sep" style="left:967px;top:376px;width:13px;height:1px"></i>
<i class="abs" style="left:966px;top:38px;width:26px;height:1px;background:#b0b0ca;box-shadow:0 1px 0 #f0f0fa"></i>
<i class="abs" style="left:966px;top:91px;width:26px;height:1px;background:#b0b0ca;box-shadow:0 1px 0 #f0f0fa"></i>
<i class="sep" style="left:1000px;top:5px;width:13px;height:1px"></i>
<i class="sep" style="left:1000px;top:44px;width:13px;height:1px"></i>
<i class="sep" style="left:1000px;top:82px;width:13px;height:1px"></i>
<i class="sep" style="left:1000px;top:119px;width:13px;height:1px"></i>
<i class="sep" style="left:1000px;top:202px;width:13px;height:1px"></i>
<i class="sep" style="left:1000px;top:240px;width:13px;height:1px"></i>
<i class="sep" style="left:1000px;top:415px;width:13px;height:1px"></i>
<i class="abs" style="left:996px;top:447px;width:28px;height:1px;background:#b0b0ca;box-shadow:0 1px 0 #f0f0fa"></i>
<i class="abs" style="left:996px;top:500px;width:28px;height:1px;background:#b0b0ca;box-shadow:0 1px 0 #f0f0fa"></i>
<svg class="abs" style="left:9px;top:626px" width="19" height="19" viewBox="0 0 18 18" preserveAspectRatio="none"><circle cx="9" cy="9" r="8.200" fill="#102838" stroke="#0a1a28"/><path d="M3,10 Q3,4 9,4 Q14,4 14,8 Q14,11 10,11 Q7,11 8,8.500" fill="none" stroke="#e8f0a0" stroke-width="2.200"/><path d="M15,8 Q15,14 9,14 Q5,14 5,11" fill="none" stroke="#78d8e0" stroke-width="2.200"/></svg>
<svg class="abs" style="left:33px;top:627px" width="17" height="17" viewBox="0 0 18 18" preserveAspectRatio="none"><path d="M6,1 V12 H17 M6,12 L1,17" stroke="#111" stroke-width="1.200" fill="none"/><path d="M4,4 L6,1 L8,4 M14,10 L17,12 L14,14 M1,14 V17 H4" stroke="#111" fill="none"/></svg>
<svg class="abs" style="left:78px;top:627px" width="17" height="17" viewBox="0 0 18 18" preserveAspectRatio="none"><path d="M3,4.500 L6,1.500 L15,1.500 L12,4.500 Z" fill="#a0ecf8" stroke="#103040" stroke-width="1"/><path d="M12,4.500 L15,1.500 L15,13.500 L12,16.500 Z" fill="#2090b0" stroke="#103040" stroke-width="1"/><rect x="3" y="4.500" width="9" height="12" rx="1" fill="#50d0e8" stroke="#103040" stroke-width="1.200"/><path d="M5.500,6 V15" stroke="#c8f8ff" stroke-width="1.300" opacity=".8"/><path d="M0,9 H3 M12,9 H18 M0,12.500 H3 M12,12.500 H18" stroke="#185848" stroke-width="1"/><path d="M3,9 H12 M3,12.500 H12" stroke="#e0ffff" stroke-width=".8" opacity=".7"/></svg>
<i class="dd" style="left:92px;top:644px"></i>
<svg class="abs" style="left:100px;top:628px" width="19" height="16" viewBox="0 0 18 18" preserveAspectRatio="none"><rect x="1" y="2" width="6" height="3.500" fill="#88a8e8" stroke="#2040a0"/><rect x="11" y="11" width="6" height="3.500" fill="#88a8e8" stroke="#2040a0"/><path d="M4,5.500 L9,9 L6,12 L10,16" stroke="#d81030" stroke-width="2" fill="none"/><path d="M9,12.500 H11" stroke="#2040a0"/></svg>
<svg class="abs" style="left:123px;top:627px" width="18" height="16" viewBox="0 0 18 18" preserveAspectRatio="none"><g fill="#a8c8f8" stroke="#2040a0" stroke-width="1"><rect x="5" y="1.500" width="8" height="3"/><rect x="5" y="7.500" width="8" height="3"/><rect x="5" y="13.500" width="8" height="3"/></g></svg>
<i class="dd" style="left:138px;top:643px"></i>
<svg class="abs" style="left:147px;top:626px" width="19" height="18" viewBox="0 0 18 18" preserveAspectRatio="none"><path d="M1,9 L10,2 L17,6 L17,10 L8,17 L1,13 Z" fill="#e8f0ff" stroke="#1840b0" stroke-width="1.300"/><path d="M1,9 L8,13 L17,6 M8,13 V17" stroke="#1840b0" stroke-width="1.200" fill="none"/></svg>
<svg class="abs" style="left:393px;top:626px" width="18" height="18" viewBox="0 0 18 18" preserveAspectRatio="none"><path d="M2,11 L8,6 L17,9 L10,15 Z" fill="#f0e878" stroke="#111" stroke-width="1.200"/><path d="M2,11 V14 L10,18 V15 M10,18 L17,12 V9" fill="#fff" stroke="#111"/><path d="M4,4 L8,2 L10,9 L6,10 Z" fill="#f0e878" stroke="#111"/><path d="M16,1 L8,10" stroke="#1840b0" stroke-width="2"/></svg>
<i class="dd" style="left:408px;top:644px"></i>
<svg class="abs" style="left:417px;top:626px" width="20" height="18" viewBox="0 0 18 18" preserveAspectRatio="none"><path d="M6,13 L11,9 L18,11 L12,16 Z" fill="#f0e878" stroke="#111" stroke-width="1"/><path d="M6,13 V15 L12,18 V16 M12,18 L18,13 V11" fill="#d8d080" stroke="#111" stroke-width=".8"/><path d="M1,2 H6 L7,3 H10 V7 H1 Z" fill="#f0e070" stroke="#111" stroke-width="1"/><path d="M10,3 Q15,3 15,8 M13,7 L15,9 L17,6.500" stroke="#1840b0" stroke-width="1.200" fill="none"/></svg>
<i class="dd" style="left:434px;top:644px"></i>
<svg class="abs" style="left:476px;top:626px" width="18" height="18" viewBox="0 0 18 18" preserveAspectRatio="none"><path d="M1,6 L5,2 L14,2 L17,5 L17,15 L3,16 L1,14 Z" fill="#a8a020" stroke="#111" stroke-width="1.300"/><path d="M3,7 L15,6 L15,14 L3,15 Z" fill="#d8d038" stroke="#111" stroke-width=".8"/><circle cx="9" cy="10.500" r="4" fill="#285838" stroke="#111"/><circle cx="9" cy="10.500" r="2" fill="#c8e8d0"/><path d="M11,11 L15,18 L12.500,16 L11,18 Z" fill="#111"/></svg>
<svg class="abs" style="left:499px;top:626px" width="18" height="18" viewBox="0 0 18 18" preserveAspectRatio="none"><path d="M1,6 L5,2 L14,2 L17,5 L17,15 L3,16 L1,14 Z" fill="#a8a020" stroke="#111" stroke-width="1.300"/><path d="M3,7 L15,6 L15,14 L3,15 Z" fill="#d8d038" stroke="#111" stroke-width=".8"/><circle cx="9" cy="10.500" r="4" fill="#285838" stroke="#111"/><circle cx="9" cy="10.500" r="2" fill="#c8e8d0"/><path d="M4,10 Q6,2 16,3" stroke="#e02020" stroke-width="2" fill="none"/><path d="M5,14 L11,8" stroke="#30a030" stroke-width="1.600"/></svg>
<svg class="abs" style="left:521px;top:626px" width="18" height="18" viewBox="0 0 18 18" preserveAspectRatio="none"><path d="M1,6 L5,2 L14,2 L17,5 L17,15 L3,16 L1,14 Z" fill="#a8a020" stroke="#111" stroke-width="1.300"/><path d="M3,7 L15,6 L15,14 L3,15 Z" fill="#d8d038" stroke="#111" stroke-width=".8"/><circle cx="11" cy="6" r="3.500" fill="#d02828" stroke="#111" stroke-width=".8"/><circle cx="7" cy="12" r="3" fill="#30a040" stroke="#111" stroke-width=".8"/><path d="M10,9 L16,17" stroke="#2050c0" stroke-width="2"/></svg>
<svg class="abs" style="left:559px;top:627px" width="19" height="17" viewBox="0 0 18 18" preserveAspectRatio="none"><text x="4" y="8" font-family="Liberation Sans,sans-serif" font-size="8" font-weight="bold" fill="#1c2c80">ABC</text><path d="M4,10 H17 M1,15 L6,11 M1,15 l1,-3 M1,15 l3.200,-.4" stroke="#1c2c80" stroke-width="1" fill="none"/><path d="M2,16.500 H6 M8,16.500 H12" stroke="#9cc" stroke-width="1"/></svg>
<i class="dd" style="left:575px;top:644px"></i>
<svg class="abs" style="left:583px;top:627px" width="19" height="17" viewBox="0 0 18 18" preserveAspectRatio="none"><path d="M7,3 H14 L17,6 L14,9 H7 Z" fill="#fff" stroke="#223" stroke-width="1.200"/><path d="M1,14 L7,9 M1,14 l1,-3.200 M1,14 l3.400,-.5" stroke="#1c2c80" stroke-width="1.100" fill="none"/><path d="M2,16.500 H6 M8,16.500 H11" stroke="#9cc" stroke-width="1"/></svg>
<i class="dd" style="left:599px;top:644px"></i>
<svg class="abs" style="left:608px;top:626px" width="18" height="18" viewBox="0 0 18 18" preserveAspectRatio="none"><path d="M1,12 L9,8 L17,11 L17,15 L9,18 L1,16 Z" fill="#38b8c0" stroke="#111" stroke-width="1"/><path d="M1,12 L9,15 L17,11 M9,15 V18" stroke="#111" fill="none"/><path d="M4,12 L9,7 L14,11.500 L9,14 Z" fill="#f0a030" stroke="#a04010" stroke-width=".8"/><rect x="6" y="1" width="6" height="5" fill="#f8d8d8" stroke="#c02020" stroke-width="1.200"/><path d="M9,6 V11" stroke="#c02020" stroke-width="1.200"/></svg>
<svg class="abs" style="left:645px;top:626px" width="18" height="19" viewBox="0 0 18 18" preserveAspectRatio="none"><path d="M3,10 L12,7 L17,10 L17,14 L8,17 L3,14 Z" fill="#30b0c0" stroke="#111" stroke-width="1"/><path d="M8,13 L17,10 M8,13 V17 M3,10 L8,13" stroke="#111" fill="none"/><path d="M8,13 L17,10 L17,14 L8,17Z" fill="#b01828" stroke="#111" stroke-width=".8"/><path d="M7,9 V2 M7,9 L2,5 M7,9 L13,6" stroke="#e8e040" stroke-width="1.400"/><circle cx="7" cy="3" r="1.600" fill="#f0e850"/><path d="M1,3 L4,6 M4,3 L1,6" stroke="#d02020" stroke-width="1"/></svg>
<svg class="abs" style="left:668px;top:626px" width="17" height="18" viewBox="0 0 18 18" preserveAspectRatio="none"><path d="M2,4 Q6,1 10,3 Q14,5 17,3 L15,15 Q11,17 8,15 Q5,13 3,16 Z" fill="#38b8a8" stroke="#102060" stroke-width="1.500"/><path d="M7,4 L8,14 L13,6 Z" fill="#e04828"/><path d="M9,3 L13,15" stroke="#f0e040" stroke-width="1.500"/></svg>
<svg class="abs" style="left:689px;top:626px" width="19" height="18" viewBox="0 0 18 18" preserveAspectRatio="none"><rect x="1.500" y="1.500" width="14" height="14" rx="2" fill="#f0e8a8" stroke="#111" stroke-width="1.300"/><circle cx="8" cy="8.500" r="5" fill="none" stroke="#111" stroke-width="1.200"/><circle cx="8" cy="8.500" r="2.300" fill="none" stroke="#111"/><path d="M8,1 V16 M1,8.500 H16" stroke="#111"/><circle cx="13" cy="13" r="3.500" fill="#d8d8e8" stroke="#445" stroke-width="1.200"/><path d="M15,15.500 L18,18" stroke="#445" stroke-width="1.600"/></svg>
<span class="t" style="left:54px;top:626px;font-size:10px;font-weight:bold;line-height:8.5px;height:18px;letter-spacing:-.6px;color:#111;white-space:pre-line;width:20px">10<span style="color:#1c2ca0">,1</span>
10<span style="color:#1c2ca0">,0</span></span>
<i class="sep" style="left:1px;top:623px;width:1px;height:13px"></i>
<i class="sep" style="left:384px;top:623px;width:1px;height:13px"></i>
<i class="sep" style="left:468px;top:623px;width:1px;height:13px"></i>
<i class="sep" style="left:550px;top:623px;width:1px;height:13px"></i>
<i class="sep" style="left:637px;top:623px;width:1px;height:13px"></i>
<div class="sunk" style="left:169px;top:628px;width:141px;height:16px"></div><span class="t" style="left:173px;top:629px;transform:scaleX(.9)">PartBody</span><div class="arrowbtn" style="left:296px;top:630px;width:12px;height:12px"></div>
<svg class="abs" style="left:984px;top:618px" width="40" height="30" viewBox="0 0 40 30">
<path d="M10,3 Q17,1 16,5 Q15,8 11,9 Q16,10 15,14 Q13,18 6,18" fill="none" stroke="#d82838" stroke-width="1.800"/>
<path d="M9,9 L5,22 Q12,23 14,17" fill="none" stroke="#3838a8" stroke-width="1.800"/>
<path d="M20,8 Q13,9 15,13 Q19,15 17,18 Q15,21 10,20" fill="none" stroke="#e8b820" stroke-width="1.800"/>
<text x="10" y="28" font-family="Liberation Sans,sans-serif" font-size="8.500" font-weight="bold" font-style="italic" fill="#303098" letter-spacing=".3">CATIA</text></svg>
</body>
</html>
